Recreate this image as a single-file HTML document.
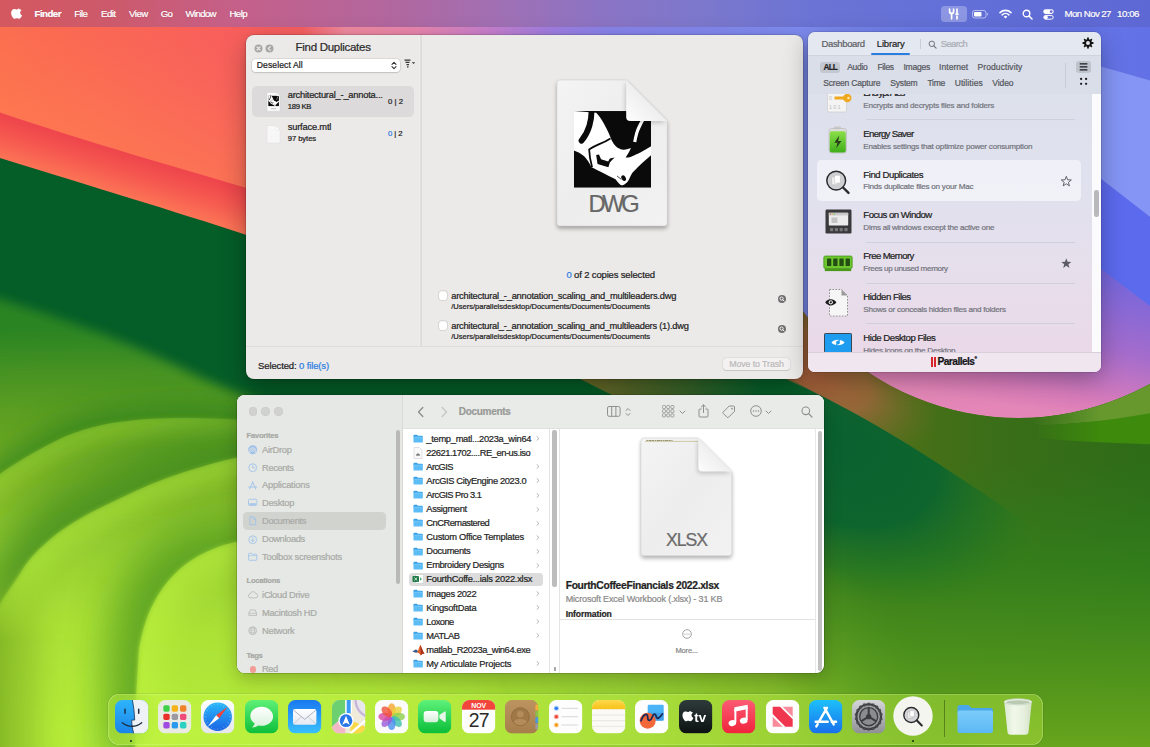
<!DOCTYPE html>
<html lang="en">
<head>
<meta charset="utf-8">
<title>Desktop</title>
<style>
*{box-sizing:border-box;margin:0;padding:0}
html,body{width:1150px;height:747px;overflow:hidden;background:#0a5c2a}
body{font-family:"Liberation Sans",sans-serif;position:relative;color:#222}
.abs{position:absolute}
.t{position:absolute;white-space:nowrap;-webkit-text-stroke:.22px}
#wall{position:absolute;left:0;top:0;width:1150px;height:747px;display:block}
svg{position:absolute;overflow:visible}
#mb{position:absolute;left:0;top:0;width:1150px;height:26.700px;background:linear-gradient(90deg,#d4585f 0,#cc5a6c 10%,#c4608a 21%,#b068a0 35%,#a070b4 43.5%,#8c74c4 52%,#7c78cc 61%,#6c74d4 70%,#6270d8 83%,#5e68d4 100%);color:#fff;text-shadow:0 0 2px rgba(0,0,0,.15)}
.win{position:absolute;overflow:hidden}
#fd{left:245.5px;top:34.5px;width:557px;height:344px;border-radius:8px;background:#ece9e9;box-shadow:0 0 0 .5px rgba(0,0,0,.22),0 10px 28px rgba(0,0,0,.28),0 2px 6px rgba(0,0,0,.12)}
#tb{left:807.5px;top:31.5px;width:293px;height:340.500px;border-radius:6.500px;box-shadow:0 0 0 .5px rgba(0,0,0,.2),0 8px 24px rgba(0,0,0,.3)}
#fw{left:236.5px;top:394.5px;width:587px;height:278px;border-radius:7.500px;background:#fff;box-shadow:0 0 0 .5px rgba(0,0,0,.28),0 6px 18px rgba(0,0,0,.22)}
#dock{position:absolute;-webkit-backdrop-filter:blur(14px);backdrop-filter:blur(14px);left:108px;top:693.5px;width:935px;height:51px;border-radius:11px;background:rgba(208,255,78,.34);box-shadow:inset 0 0 0 .6px rgba(235,255,190,.45),0 0 0 .5px rgba(0,40,0,.16)}
.ic{position:absolute;border-radius:7.600px;overflow:hidden}
</style>
</head>
<body>
<svg id="wall" viewBox="0 0 1150 747">
<defs>
<linearGradient id="sky" x1="0" y1="0" x2="1" y2="0">
<stop offset="0" stop-color="#fa664f"/>
<stop offset="0.2" stop-color="#f75a5e"/>
<stop offset="0.262" stop-color="#f65c62"/>
<stop offset="0.3" stop-color="#f08aa2"/>
<stop offset="0.36" stop-color="#ea86ac"/>
<stop offset="0.42" stop-color="#cc80cc"/>
<stop offset="0.48" stop-color="#a07ee2"/>
<stop offset="0.53" stop-color="#8884ec"/>
<stop offset="0.7" stop-color="#7e8cf0"/>
<stop offset="0.8" stop-color="#6c7cea"/>
<stop offset="1" stop-color="#6272e6"/>
</linearGradient>
<linearGradient id="coralv" gradientUnits="userSpaceOnUse" x1="60" y1="131" x2="122" y2="-59">
<stop offset="0" stop-color="#ff8150" stop-opacity="0.62"/>
<stop offset="0.45" stop-color="#ff8150" stop-opacity="0.25"/>
<stop offset="1" stop-color="#ff8150" stop-opacity="0"/>
</linearGradient>
<linearGradient id="band" x1="0" y1="0" x2="0.3" y2="1">
<stop offset="0" stop-color="#ee474c"/>
<stop offset="1" stop-color="#fe7c58"/>
</linearGradient>
<linearGradient id="bandfade" x1="0" y1="0" x2="1" y2="0">
<stop offset="0" stop-color="#07602b" stop-opacity="0"/>
<stop offset="0.3" stop-color="#07602b" stop-opacity="0"/>
<stop offset="0.62" stop-color="#4a6422" stop-opacity="0.75"/>
<stop offset="1" stop-color="#07602b" stop-opacity="1"/>
</linearGradient>
<filter id="b2"><feGaussianBlur stdDeviation="2"/></filter>
<filter id="b4"><feGaussianBlur stdDeviation="5.5"/></filter>
<filter id="b8"><feGaussianBlur stdDeviation="8"/></filter>
<filter id="b14"><feGaussianBlur stdDeviation="14"/></filter>
<filter id="b20" x="-30%" y="-30%" width="160%" height="160%"><feGaussianBlur stdDeviation="20"/></filter>
<filter id="b25"><feGaussianBlur stdDeviation="25"/></filter>
</defs>
<!-- sky -->
<rect x="0" y="0" width="1150" height="450" fill="url(#sky)"/>
<rect x="0" y="0" width="500" height="250" fill="url(#coralv)"/>
<!-- right sky -->
<polygon points="985,33.3 1150,80.5 1150,217.0 985,89.0" fill="#8595f5"/>
<polygon points="1000,100.6 1150,217 1150,420 1000,420" fill="#5c6aee"/>
<linearGradient id="purp" gradientUnits="userSpaceOnUse" x1="1100" y1="270" x2="1070" y2="420">
<stop offset="0" stop-color="#7466dc"/>
<stop offset="0.5" stop-color="#a46ccc"/>
<stop offset="0.85" stop-color="#d97cba"/>
<stop offset="1" stop-color="#e487b8"/>
</linearGradient>
<polygon points="860,87 1150,306 1150,430 860,430" fill="url(#purp)"/>
<!-- hill C -->
<linearGradient id="hillc" gradientUnits="userSpaceOnUse" x1="800" y1="0" x2="1150" y2="0">
<stop offset="0" stop-color="#a4623a"/>
<stop offset="0.12" stop-color="#96683a"/>
<stop offset="0.3" stop-color="#5e6f22"/>
<stop offset="0.5" stop-color="#457316"/>
<stop offset="0.75" stop-color="#3c7a12"/>
<stop offset="1" stop-color="#4a8a18"/>
</linearGradient>
<path d="M600,200 L747.4,147 A271.1,271.1 0 0 0 1289.6,147 L1300,760 L600,760 Z" fill="url(#hillc)"/>
<path d="M1150,392 C1100,412 1060,422 1020,424 C1070,436 1110,442 1150,444 Z" fill="#5a9c1e" filter="url(#b2)"/>
<path d="M1150,384 C1110,405 1070,418 1030,421 C1070,419 1110,408 1150,394 Z" fill="#6c9c34" opacity="0.8"/>

<!-- layer B (band) -->
<linearGradient id="bandp" gradientUnits="userSpaceOnUse" x1="100" y1="146" x2="86" y2="192">
<stop offset="0" stop-color="#ee464c"/>
<stop offset="0.35" stop-color="#f5564f"/>
<stop offset="1" stop-color="#fe7d58"/>
</linearGradient>
<linearGradient id="bandh" gradientUnits="userSpaceOnUse" x1="250" y1="0" x2="790" y2="0">
<stop offset="0" stop-color="#b06a38" stop-opacity="0"/>
<stop offset="0.35" stop-color="#a0682f" stop-opacity="0.7"/>
<stop offset="0.62" stop-color="#6c6a28" stop-opacity="1"/>
<stop offset="0.8" stop-color="#3a6428" stop-opacity="1"/>
<stop offset="0.95" stop-color="#07602b" stop-opacity="1"/>
</linearGradient>
<path id="pB" d="M-10,109 C90,143 170,165 245,187.5 C450,255 700,335 824,397 C900,436 960,478 1013,513 C1060,545 1100,600 1120,760 L-10,760 Z" fill="url(#bandp)"/>
<path d="M-10,109 C90,143 170,165 245,187.5 C450,255 700,335 824,397 C900,436 960,478 1013,513 C1060,545 1100,600 1120,760 L-10,760 Z" fill="url(#bandh)"/>
<!-- hill A -->
<path id="pA" d="M-10,155 C90,186 170,210 245,234.5 C380,283 500,338 582,380 C600,389 606,392 612,395 C700,440 770,505 820,560 C870,615 920,660 960,700 L1200,760 L-10,760 Z" fill="#055d28"/>
<!-- arc 1 -->
<radialGradient id="lz" gradientUnits="userSpaceOnUse" cx="0" cy="0" r="1" gradientTransform="translate(90,735) scale(1150,405)">
<stop offset="0" stop-color="#b8ee3a"/>
<stop offset="0.28" stop-color="#abe136"/>
<stop offset="0.48" stop-color="#94cc30"/>
<stop offset="0.63" stop-color="#7eb628"/>
<stop offset="0.77" stop-color="#62a222"/>
<stop offset="0.9" stop-color="#469220"/>
<stop offset="1" stop-color="#2a8422"/>
</radialGradient>
<linearGradient id="fadeRg" gradientUnits="userSpaceOnUse" x1="300" y1="0" x2="640" y2="0">
<stop offset="0" stop-color="#fff"/><stop offset="1" stop-color="#000"/>
</linearGradient>
<mask id="fadeR" maskUnits="userSpaceOnUse" x="-50" y="0" width="1300" height="800"><rect x="-50" y="0" width="1300" height="800" fill="url(#fadeRg)"/></mask>
<clipPath id="c1"><path d="M-20,293 C40,311 70,322 96,331 C130,345 165,359 193,374 C300,425 480,470 600,500 C700,525 780,540 820,560 C870,590 920,650 949,680 L1200,780 L-20,780 Z"/></clipPath>
<clipPath id="c2"><path d="M-20,490 C-10,480 20,458 64,437 C90,426 110,423 128,421 C150,418 170,418 193,418 C300,420 420,440 560,520 C700,600 800,690 830,780 L-20,780 Z"/></clipPath>
<clipPath id="c3"><path d="M-20,640 C0,600 10,590 21,572 C28,560 36,552 45,544 C62,528 85,515 104,506 C125,496 145,486 167,478 C190,470 215,462 240,457 C360,440 470,480 560,560 C640,630 680,700 690,780 L-20,780 Z"/></clipPath>
<clipPath id="c4"><path d="M136,780 C135,740 135,720 136,700 C137,680 138,665 139,649 C143,628 148,612 157,597 C167,580 180,567 195,558 C210,549 225,544 240,541 C330,530 420,560 480,640 C510,690 520,740 520,780 Z"/></clipPath>
<path d="M-20,293 C40,311 70,322 96,331 C130,345 165,359 193,374 C300,425 480,470 600,500 C700,525 780,540 820,560 C870,590 920,650 949,680 L1200,780 L-20,780 Z" fill="url(#lz)" filter="url(#b4)"/>
<g mask="url(#fadeR)">
<!-- arc 2 -->
<g clip-path="url(#c1)"><path d="M-20,490 C-10,480 20,458 64,437 C90,426 110,423 128,421 C150,418 170,418 193,418 C300,420 420,440 560,520 C700,600 800,690 830,780 L-20,780 Z" fill="#2a7e1e" opacity="0.75" filter="url(#b14)" transform="translate(-2,-14)"/></g>
<path d="M-20,490 C-10,480 20,458 64,437 C90,426 110,423 128,421 C150,418 170,418 193,418 C300,420 420,440 560,520 C700,600 800,690 830,780 L-20,780 Z" fill="url(#lz)" filter="url(#b2)"/>
<g clip-path="url(#c2)"><path d="M-20,490 C-10,480 20,458 64,437 C90,426 110,423 128,421 C150,418 170,418 193,418 C300,420 420,440 560,520" fill="none" stroke="#a4dc38" stroke-width="36" opacity="0.4" filter="url(#b8)"/></g>
<!-- arc 3 -->
<g clip-path="url(#c2)"><path d="M-20,640 C0,600 10,590 21,572 C28,560 36,552 45,544 C62,528 85,515 104,506 C125,496 145,486 167,478 C190,470 215,462 240,457 C360,440 470,480 560,560 C640,630 680,700 690,780 L-20,780 Z" fill="#3a861e" opacity="0.75" filter="url(#b20)" transform="translate(-14,-32)"/></g>
<path d="M-20,640 C0,600 10,590 21,572 C28,560 36,552 45,544 C62,528 85,515 104,506 C125,496 145,486 167,478 C190,470 215,462 240,457 C360,440 470,480 560,560 C640,630 680,700 690,780 L-20,780 Z" fill="url(#lz)" filter="url(#b2)"/>
<g clip-path="url(#c3)"><path d="M-20,640 C0,600 10,590 21,572 C28,560 36,552 45,544 C62,528 85,515 104,506 C125,496 145,486 167,478 C190,470 215,462 240,457 C360,440 470,480 560,560" fill="none" stroke="#b4ec3c" stroke-width="40" opacity="0.4" filter="url(#b8)"/></g>
<!-- arc 4 -->
<g clip-path="url(#c3)"><path d="M136,780 C135,740 135,720 136,700 C137,680 138,665 139,649 C143,628 148,612 157,597 C167,580 180,567 195,558 C210,549 225,544 240,541 C330,530 420,560 480,640 C510,690 520,740 520,780 Z" fill="#4a941e" opacity="0.75" filter="url(#b20)" transform="translate(-30,-18)"/></g>
<path d="M136,780 C135,740 135,720 136,700 C137,680 138,665 139,649 C143,628 148,612 157,597 C167,580 180,567 195,558 C210,549 225,544 240,541 C330,530 420,560 480,640 C510,690 520,740 520,780 Z" fill="url(#lz)" filter="url(#b2)"/>
<g clip-path="url(#c4)"><path d="M136,780 C135,740 135,720 136,700 C137,680 138,665 139,649 C143,628 148,612 157,597 C167,580 180,567 195,558 C210,549 225,544 240,541 C330,530 420,560 480,640" fill="none" stroke="#c0f440" stroke-width="50" opacity="0.5" filter="url(#b14)"/></g>
</g>
<!-- left-bottom edge shading -->
<linearGradient id="lbh" gradientUnits="userSpaceOnUse" x1="0" y1="0" x2="66" y2="0">
<stop offset="0" stop-color="#7fb224" stop-opacity="0.85"/>
<stop offset="0.45" stop-color="#86ba28" stop-opacity="0.5"/>
<stop offset="1" stop-color="#a0d432" stop-opacity="0"/>
</linearGradient>
<linearGradient id="lbv" gradientUnits="userSpaceOnUse" x1="0" y1="560" x2="0" y2="640">
<stop offset="0" stop-color="#000"/><stop offset="1" stop-color="#fff"/>
</linearGradient>
<mask id="lbm" maskUnits="userSpaceOnUse" x="0" y="540" width="80" height="220"><rect x="0" y="540" width="80" height="220" fill="url(#lbv)"/></mask>
<rect x="0" y="540" width="70" height="220" fill="url(#lbh)" mask="url(#lbm)"/>
<!-- right-bottom region redraw -->
<linearGradient id="rfadeg" gradientUnits="userSpaceOnUse" x1="775" y1="0" x2="824" y2="0">
<stop offset="0" stop-color="#000"/><stop offset="1" stop-color="#fff"/>
</linearGradient>
<mask id="rfade" maskUnits="userSpaceOnUse" x="700" y="0" width="600" height="800"><rect x="700" y="0" width="600" height="800" fill="url(#rfadeg)"/></mask>
<linearGradient id="rvl" gradientUnits="userSpaceOnUse" x1="0" y1="460" x2="0" y2="747">
<stop offset="0" stop-color="#2c7c1c" stop-opacity="0"/>
<stop offset="0.38" stop-color="#34821c" stop-opacity="0.8"/>
<stop offset="0.75" stop-color="#52961c" stop-opacity="0.93"/>
<stop offset="1" stop-color="#69a71c" stop-opacity="0.96"/>
</linearGradient>
<radialGradient id="rtri" gradientUnits="userSpaceOnUse" cx="0" cy="0" r="1" gradientTransform="translate(810,425) rotate(31) scale(255,150)">
<stop offset="0" stop-color="#096030" stop-opacity="1"/>
<stop offset="0.55" stop-color="#0b642e" stop-opacity="0.95"/>
<stop offset="0.8" stop-color="#1c7226" stop-opacity="0.55"/>
<stop offset="1" stop-color="#2f7e1c" stop-opacity="0"/>
</radialGradient>
<radialGradient id="rglow" gradientUnits="userSpaceOnUse" cx="0" cy="0" r="1" gradientTransform="translate(780,770) rotate(-40) scale(190,340)">
<stop offset="0" stop-color="#84c02a" stop-opacity="1"/>
<stop offset="0.45" stop-color="#72ae24" stop-opacity="0.85"/>
<stop offset="1" stop-color="#4c9420" stop-opacity="0"/>
</radialGradient>
<clipPath id="cB"><path d="M700,335 C760,362 800,385 824,397 C900,436 960,478 1013,513 C1060,545 1100,600 1150,700 L1150,760 L700,760 Z"/></clipPath>
<linearGradient id="hillc2" gradientUnits="userSpaceOnUse" x1="800" y1="0" x2="1150" y2="0">
<stop offset="0" stop-color="#5e7022"/>
<stop offset="0.28" stop-color="#4a7018"/>
<stop offset="0.57" stop-color="#3a6e18"/>
<stop offset="1" stop-color="#2e6c18"/>
</linearGradient>
<radialGradient id="brown" gradientUnits="userSpaceOnUse" cx="0" cy="0" r="1" gradientTransform="translate(800,368) rotate(25) scale(150,70)">
<stop offset="0" stop-color="#ac5e3c" stop-opacity="1"/>
<stop offset="0.5" stop-color="#9a663a" stop-opacity="0.9"/>
<stop offset="1" stop-color="#6e6c28" stop-opacity="0"/>
</radialGradient>
<linearGradient id="wfade" gradientUnits="userSpaceOnUse" x1="1030" y1="0" x2="1100" y2="0">
<stop offset="0" stop-color="#000"/><stop offset="1" stop-color="#fff"/>
</linearGradient>
<mask id="wmask" maskUnits="userSpaceOnUse" x="1000" y="350" width="200" height="150"><rect x="1000" y="350" width="200" height="150" fill="url(#wfade)"/></mask>
<clipPath id="cC"><path d="M600,200 L747.4,147 A271.1,271.1 0 0 0 1289.6,147 L1300,760 L600,760 Z"/></clipPath>
<g mask="url(#rfade)">
<path d="M600,200 L747.4,147 A271.1,271.1 0 0 0 1289.6,147 L1300,760 L600,760 Z" fill="url(#hillc2)"/>
<g clip-path="url(#cC)"><rect x="640" y="280" width="340" height="220" fill="url(#brown)"/></g>
<g mask="url(#wmask)" clip-path="url(#cC)">
<path d="M1020,415 L1160,370 L1160,414 C1110,421 1070,424.500 1039,425.400 Z" fill="#66982e"/>
<path d="M1039,425.400 C1070,424.500 1110,421 1160,411.500 L1160,444.500 C1120,443.500 1080,442 1039,438 Z" fill="#3e8a0c"/>
</g>
<rect x="700" y="440" width="500" height="320" fill="url(#rvl)"/>
<g clip-path="url(#cB)"><rect x="700" y="300" width="500" height="460" fill="url(#rtri)"/></g>
<rect x="700" y="400" width="500" height="360" fill="url(#rglow)"/>
</g>
</svg>
<div id="mb">
<svg style="left:12.2px;top:7.600px" width="10.200" height="11.400" viewBox="-54 -2 204 208"><path fill="#fff" d="M141.5 147.300c-3.900 9-8.500 17.300-13.900 24.900-7.300 10.400-13.300 17.600-17.900 21.600-7.100 6.600-14.800 9.900-22.900 10.100-5.900 0-12.900-1.700-21.200-5.100-8.300-3.400-15.900-5.100-22.800-5.100-7.300 0-15.100 1.700-23.400 5.100-8.400 3.400-15.100 5.200-20.200 5.400-7.800.3-15.700-3.100-23.500-10.400-5-4.400-11.200-11.900-18.700-22.500-8-11.300-14.600-24.300-19.800-39.200-5.500-16.100-8.300-31.600-8.300-46.700 0-17.300 3.700-32.100 11.200-44.600 5.900-10 13.700-18 23.400-23.800 9.800-5.800 20.300-8.800 31.700-9 6.200 0 14.400 1.900 24.500 5.700 10.100 3.800 16.600 5.700 19.400 5.700 2.100 0 9.300-2.200 21.500-6.700 11.500-4.100 21.200-5.900 29.200-5.200 21.600 1.700 37.800 10.300 48.600 25.600-19.300 11.700-28.900 28.100-28.700 49.100.2 16.400 6.100 30 17.800 40.800 5.300 5 11.200 8.900 17.800 11.600-1.400 4.100-2.900 8.100-4.500 11.900zM92 4.100c0 12.800-4.700 24.800-14 35.900-11.300 13.200-24.900 20.800-39.700 19.600-.2-1.500-.3-3.200-.3-4.900 0-12.300 5.400-25.500 14.900-36.300 4.800-5.500 10.800-10 18.200-13.600C78.500 1.200 85.500-.8 92.100-1c.2 1.700.3 3.400.3 5.100z"/></svg>
<span class="t" style="left:34.60px;top:7.11px;font-size:9.70px;line-height:13px;letter-spacing:-0.557px;font-weight:bold;color:#fff;">Finder</span>
<span class="t" style="left:74.30px;top:7.11px;font-size:9.70px;line-height:13px;letter-spacing:-0.683px;color:#fff;">File</span>
<span class="t" style="left:101.00px;top:7.11px;font-size:9.70px;line-height:13px;letter-spacing:-0.579px;color:#fff;">Edit</span>
<span class="t" style="left:129.00px;top:7.11px;font-size:9.70px;line-height:13px;letter-spacing:-0.513px;color:#fff;">View</span>
<span class="t" style="left:160.70px;top:7.11px;font-size:9.70px;line-height:13px;letter-spacing:-0.770px;color:#fff;">Go</span>
<span class="t" style="left:185.50px;top:7.11px;font-size:9.70px;line-height:13px;letter-spacing:-0.667px;color:#fff;">Window</span>
<span class="t" style="left:229.40px;top:7.11px;font-size:9.70px;line-height:13px;letter-spacing:-0.563px;color:#fff;">Help</span>
<div class="abs" style="left:940.5px;top:6px;width:26.5px;height:16px;border-radius:3.5px;background:rgba(255,255,255,.27)"></div>
<svg style="left:947px;top:8px" width="14" height="12" viewBox="0 0 14 12"><g fill="none" stroke="#fff" stroke-width="1.700" stroke-linecap="round"><path d="M2.600 1.200v2.200a2 2 0 0 0 4 0V1.200M4.600 5.400V10.800"/><path d="M10 1.200V6M10 8.200v2.600"/><path d="M8.700 6.200h2.600" stroke-width="1.300"/></g></svg>
<svg style="left:972px;top:9.500px" width="17" height="9" viewBox="0 0 17 9"><rect x=".5" y=".5" width="13.500" height="7.500" rx="2.200" fill="none" stroke="#fff" stroke-opacity=".55"/><rect x="2" y="2" width="7.500" height="4.500" rx="1" fill="#fff"/><path d="M15.200 3v2.600c.8-.3 1.100-.8 1.100-1.300s-.3-1-1.100-1.300z" fill="#fff" fill-opacity=".6"/></svg>
<svg style="left:999px;top:8.500px" width="13" height="10" viewBox="0 0 13 10"><g fill="none" stroke="#fff" stroke-linecap="round"><path d="M1 3.600a8 8 0 0 1 11 0" stroke-width="1.600"/><path d="M3.100 5.800a5 5 0 0 1 6.800 0" stroke-width="1.600"/></g><path d="M6.500 9.600 4.700 7.700a2.600 2.600 0 0 1 3.600 0z" fill="#fff"/></svg>
<svg style="left:1021.500px;top:8.500px" width="11" height="11" viewBox="0 0 11 11"><circle cx="4.500" cy="4.500" r="3.300" fill="none" stroke="#fff" stroke-width="1.400"/><path d="M7 7l3 3" stroke="#fff" stroke-width="1.600" stroke-linecap="round"/></svg>
<svg style="left:1043px;top:8.500px" width="11" height="11" viewBox="0 0 11 11"><rect x=".3" y=".3" width="10.400" height="4.600" rx="2.300" fill="#fff"/><circle cx="8.200" cy="2.600" r="1.400" fill="#6a6cd2"/><rect x=".8" y="6.400" width="9.400" height="3.800" rx="1.900" fill="none" stroke="#fff" stroke-width="1"/><circle cx="2.900" cy="8.300" r="1.900" fill="#fff"/></svg>
<span class="t" style="left:1064.60px;top:7.11px;font-size:9.70px;line-height:13px;letter-spacing:-0.600px;color:#fff;">Mon Nov 27</span>
<span class="t" style="left:1117.00px;top:7.11px;font-size:9.70px;line-height:13px;letter-spacing:-0.435px;color:#fff;">10:06</span>
</div>
<div id="fd" class="win">
<div class="abs" style="left:173.800px;top:0;width:1px;height:311.500px;background:#f1eeee"></div>
<div class="abs" style="left:174.900px;top:0;width:1.300px;height:311.500px;background:#dfdcdc"></div>
<div class="abs" style="left:0;top:311px;width:557px;height:1px;background:#dfdcdc"></div>
<svg style="left:8.7px;top:9.0px" width="9" height="9" viewBox="0 0 9 9"><circle cx="4.500" cy="4.500" r="4" fill="#a9a8a8"/><path d="M3 3l3 3M6 3l-3 3" stroke="#edebeb" stroke-width="1.100" stroke-linecap="round"/></svg>
<svg style="left:19.6px;top:9.0px" width="9" height="9" viewBox="0 0 9 9"><circle cx="4.500" cy="4.500" r="4" fill="#a9a8a8"/><path d="M5.300 2.600 3.300 4.500l2 1.900" fill="none" stroke="#edebeb" stroke-width="1.200" stroke-linecap="round" stroke-linejoin="round"/></svg>
<span class="t" style="left:50.10px;top:5.63px;font-size:11.50px;line-height:15px;letter-spacing:-0.284px;color:#2b2b2b;">Find Duplicates</span>
<div class="abs" style="left:6.400px;top:24.800px;width:148.500px;height:12.600px;border-radius:3.500px;background:#fff;box-shadow:0 0 0 .5px rgba(0,0,0,.1),0 .5px 1.500px rgba(0,0,0,.22)"></div>
<span class="t" style="left:11.30px;top:25.40px;font-size:8.60px;line-height:11px;letter-spacing:0.089px;color:#222;">Deselect All</span>
<svg style="left:145.8px;top:26.5px" width="6" height="9" viewBox="0 0 6 9"><path d="M1 3.300 3 1.300l2 2M1 5.700l2 2 2-2" fill="none" stroke="#333" stroke-width="1.100" stroke-linecap="round" stroke-linejoin="round"/></svg>
<svg style="left:158.5px;top:24.8px" width="12" height="9" viewBox="0 0 12 9"><path d="M.5 1.200h6M1.500 3.400h4M2.500 5.600h2.500M3 7.800h1.500" stroke="#333" stroke-width="1.300"/><path d="M7.800 3.200h3.400L9.500 5z" fill="#333"/></svg>
<div class="abs" style="left:6.400px;top:51.400px;width:162.400px;height:31px;border-radius:5px;background:#dcdada"></div>
<svg style="left:20.3px;top:57.6px" width="15" height="20" viewBox="0 0 15 20"><path d="M1 .5h9.500l3.500 3.500v15.200h-13z" fill="#fbfbfb" stroke="#d2d2d2" stroke-width=".5"/><g transform="translate(2.150,3.500) scale(.0146)"><g clip-path="url(#rhc)"><rect x="2" y="8" width="738" height="734" fill="#0a0a0a"/><path d="M2,8 L215,25 C250,60 290,120 340,230 C352,262 362,285 370,300 C390,335 405,350 420,360 C445,375 465,380 480,378 C505,376 530,370 548,362 C535,395 515,425 497,452 C520,455 545,448 560,440 C600,425 680,385 740,345 L740,430 C700,465 660,500 640,520 C600,560 575,585 560,600 C545,625 535,650 530,660 C520,680 510,692 500,700 C490,710 480,716 470,718 C462,720 455,718 450,715 C430,700 415,680 400,660 C360,640 330,625 300,610 C250,585 200,560 170,545 C150,500 125,465 100,440 C65,410 30,395 2,385 Z" fill="#fff"/><path d="M170,0 C172,50 165,100 150,150 C135,200 110,250 75,292" fill="none" stroke="#0a0a0a" stroke-width="56" stroke-linecap="round"/><rect x="100" y="-40" width="140" height="48" fill="#edebeb"/><path d="M352,270 C320,290 280,310 250,322 C210,340 170,358 148,376 C150,430 160,490 176,545" fill="none" stroke="#0a0a0a" stroke-width="17" stroke-linejoin="round"/><path d="M660,95 C635,140 615,180 603,220 C593,255 588,280 584,305" fill="none" stroke="#fff" stroke-width="30"/><path d="M215,428 L242,424 L262,470 L330,492 L346,462 L392,453 C375,470 358,485 346,500 L332,546 L228,515 Z" fill="#0a0a0a"/><path d="M268,438 L322,462 L314,474 L262,452 Z" fill="#fff"/><ellipse cx="478" cy="650" rx="20" ry="29" fill="#0a0a0a" transform="rotate(-28 478 650)"/><path d="M415,630 L456,662" stroke="#0a0a0a" stroke-width="7"/></g></g><path d="M10.500 .5v2.500a1 1 0 0 0 1 1h2.500z" fill="#fff" stroke="#d2d2d2" stroke-width=".4"/><path d="M5 16.700h5" stroke="#9a9a9a" stroke-width=".6"/></svg>
<span class="t" style="left:42.20px;top:54.91px;font-size:9.30px;line-height:12px;letter-spacing:-0.212px;color:#222;">architectural_-_annota...</span>
<span class="t" style="left:42.20px;top:67.79px;font-size:7.70px;line-height:10px;letter-spacing:-0.293px;color:#222;">189 KB</span>
<span class="t" style="left:142.50px;top:62.19px;font-size:7.70px;line-height:10px;letter-spacing:0.031px;color:#222;">0 | 2</span>
<svg style="left:20.3px;top:90.0px" width="15" height="19" viewBox="0 0 15 19"><path d="M1 .5h8.500l4.500 4.500v13h-13z" fill="#f7f7f7" stroke="#dcdcdc" stroke-width=".5"/><path d="M9.500 .5v3.500a1 1 0 0 0 1 1h3.500z" fill="#fff" stroke="#dcdcdc" stroke-width=".5"/></svg>
<span class="t" style="left:42.20px;top:86.41px;font-size:9.30px;line-height:12px;letter-spacing:-0.180px;color:#222;">surface.mtl</span>
<span class="t" style="left:42.20px;top:99.89px;font-size:7.70px;line-height:10px;letter-spacing:-0.076px;color:#222;">97 bytes</span>
<span class="t" style="left:142.50px;top:94.39px;font-size:7.70px;line-height:10px;color:#222;letter-spacing:-.1px;"><span style="color:#2a7de1">0</span> | 2</span>
<svg style="left:303.8px;top:39.3px" width="126.2" height="163.9" viewBox="0 0 126.2 163.9"><defs><linearGradient id="dg557" x1="0" y1="0" x2="1" y2="1"><stop offset="0" stop-color="#f4f4f4"/><stop offset=".5" stop-color="#ededed"/><stop offset="1" stop-color="#f2f2f2"/></linearGradient><linearGradient id="df557" x1="0" y1="1" x2="1" y2="0"><stop offset="0" stop-color="#fdfdfd"/><stop offset="1" stop-color="#e0e0e0"/></linearGradient><clipPath id="rhc"><rect x="2" y="8" width="738" height="734"/></clipPath><filter id="ds557" x="-20%" y="-20%" width="140%" height="140%"><feGaussianBlur stdDeviation="2.200"/></filter></defs><path d="M11.0 6.0 h66.2 l41.0 41.0 v101.9 a3 3 0 0 1 -3 3 h-104.2 a3 3 0 0 1 -3 -3 v-139.9 a3 3 0 0 1 3 -3z" fill="#000" opacity=".33" filter="url(#ds557)" transform="translate(0,2.500)"/><path d="M11.0 6.0 h66.2 l41.0 41.0 v101.9 a3 3 0 0 1 -3 3 h-104.2 a3 3 0 0 1 -3 -3 v-139.9 a3 3 0 0 1 3 -3z" fill="url(#dg557)" stroke="#d0d0d0" stroke-width=".5"/><g transform="translate(24.700,36.200) scale(.1045)"><g clip-path="url(#rhc)"><rect x="2" y="8" width="738" height="734" fill="#0a0a0a"/><path d="M2,8 L215,25 C250,60 290,120 340,230 C352,262 362,285 370,300 C390,335 405,350 420,360 C445,375 465,380 480,378 C505,376 530,370 548,362 C535,395 515,425 497,452 C520,455 545,448 560,440 C600,425 680,385 740,345 L740,430 C700,465 660,500 640,520 C600,560 575,585 560,600 C545,625 535,650 530,660 C520,680 510,692 500,700 C490,710 480,716 470,718 C462,720 455,718 450,715 C430,700 415,680 400,660 C360,640 330,625 300,610 C250,585 200,560 170,545 C150,500 125,465 100,440 C65,410 30,395 2,385 Z" fill="#fff"/><path d="M170,0 C172,50 165,100 150,150 C135,200 110,250 75,292" fill="none" stroke="#0a0a0a" stroke-width="56" stroke-linecap="round"/><rect x="100" y="-40" width="140" height="48" fill="#edebeb"/><path d="M352,270 C320,290 280,310 250,322 C210,340 170,358 148,376 C150,430 160,490 176,545" fill="none" stroke="#0a0a0a" stroke-width="17" stroke-linejoin="round"/><path d="M660,95 C635,140 615,180 603,220 C593,255 588,280 584,305" fill="none" stroke="#fff" stroke-width="30"/><path d="M215,428 L242,424 L262,470 L330,492 L346,462 L392,453 C375,470 358,485 346,500 L332,546 L228,515 Z" fill="#0a0a0a"/><path d="M268,438 L322,462 L314,474 L262,452 Z" fill="#fff"/><ellipse cx="478" cy="650" rx="20" ry="29" fill="#0a0a0a" transform="rotate(-28 478 650)"/><path d="M415,630 L456,662" stroke="#0a0a0a" stroke-width="7"/></g></g><path d="M77.2 6.0 v37.0 a4 4 0 0 0 4 4 h37.0 z" fill="#000" opacity=".18" filter="url(#ds557)" transform="translate(-1,2)"/><path d="M77.2 6.0 v37.0 a4 4 0 0 0 4 4 h37.0 z" fill="url(#df557)"/></svg>
<span class="t" style="left:343.00px;top:154.77px;font-size:23.70px;line-height:31px;letter-spacing:-3.306px;color:#666;">DWG</span>
<span class="t" style="left:321.00px;top:234.11px;font-size:9.50px;line-height:12px;color:#222;letter-spacing:-.16px;"><span style="color:#2a7de1">0</span> of 2 copies selected</span>
<div class="abs" style="left:193.1px;top:256.8px;width:8.500px;height:8.500px;border-radius:2.200px;background:#fff;box-shadow:0 0 0 .5px rgba(0,0,0,.16),inset 0 .5px 1px rgba(0,0,0,.08)"></div>
<span class="t" style="left:205.70px;top:255.31px;font-size:9.30px;line-height:12px;letter-spacing:-0.224px;color:#222;">architectural_-_annotation_scaling_and_multileaders.dwg</span>
<span class="t" style="left:205.70px;top:267.49px;font-size:7.60px;line-height:10px;letter-spacing:-0.031px;color:#222;">/Users/parallelsdesktop/Documents/Documents/Documents</span>
<svg style="left:532.5px;top:260.2px" width="8" height="8" viewBox="0 0 8 8"><circle cx="4" cy="4" r="4" fill="#6f6f6f"/><circle cx="3.600" cy="3.600" r="1.600" fill="none" stroke="#fff" stroke-width=".9"/><path d="M4.800 4.800l1.400 1.400" stroke="#fff" stroke-width=".9" stroke-linecap="round"/></svg>
<div class="abs" style="left:193.1px;top:286.7px;width:8.500px;height:8.500px;border-radius:2.200px;background:#fff;box-shadow:0 0 0 .5px rgba(0,0,0,.16),inset 0 .5px 1px rgba(0,0,0,.08)"></div>
<span class="t" style="left:205.70px;top:285.21px;font-size:9.30px;line-height:12px;letter-spacing:-0.233px;color:#222;">architectural_-_annotation_scaling_and_multileaders (1).dwg</span>
<span class="t" style="left:205.70px;top:297.39px;font-size:7.60px;line-height:10px;letter-spacing:-0.031px;color:#222;">/Users/parallelsdesktop/Documents/Documents/Documents</span>
<svg style="left:532.5px;top:290.1px" width="8" height="8" viewBox="0 0 8 8"><circle cx="4" cy="4" r="4" fill="#6f6f6f"/><circle cx="3.600" cy="3.600" r="1.600" fill="none" stroke="#fff" stroke-width=".9"/><path d="M4.800 4.800l1.400 1.400" stroke="#fff" stroke-width=".9" stroke-linecap="round"/></svg>
<span class="t" style="left:12.60px;top:325.11px;font-size:9.50px;line-height:12px;color:#222;letter-spacing:-.13px;">Selected: <span style="color:#2a7de1">0 file(s)</span></span>
<div class="abs" style="left:477.3px;top:323.2px;width:67.500px;height:12.600px;border-radius:3.500px;background:#f3f1f1;box-shadow:0 0 0 .5px rgba(0,0,0,.07),0 .5px 1px rgba(0,0,0,.12)"></div>
<span class="t" style="left:483.80px;top:324.10px;font-size:8.80px;line-height:11px;letter-spacing:-0.097px;color:#bcbaba;">Move to Trash</span>
</div>
<div id="tb" class="win">
<div class="abs" style="left:0;top:0;width:293px;height:341px;background:linear-gradient(180deg,#e4e8f0 0,#e4e8f0 23px,#dadee8 23.5px,#dadee8 62px,#dde1ec 62.5px,#e0e1ee 150px,#e6dfec 230px,#ead9e8 320px,#ecdbe9 341px)"></div>
<div class="abs" style="left:284.500px;top:62.200px;width:9px;height:258px;background:#fbfbfd"></div>
<div class="abs" style="left:286.500px;top:158px;width:4.600px;height:27px;border-radius:2.300px;background:#b9b9bb"></div>
<div class="abs" style="left:0;top:23px;width:293px;height:.6px;background:#cfd3dc"></div>
<span class="t" style="left:14.10px;top:6.31px;font-size:9.50px;line-height:12px;letter-spacing:-0.375px;color:#5f6168;">Dashboard</span>
<span class="t" style="left:69.30px;top:6.31px;font-size:9.50px;line-height:12px;letter-spacing:-0.177px;color:#1d1d22;-webkit-text-stroke:.2px #1d1d22;">Library</span>
<div class="abs" style="left:63.0px;top:21.9px;width:39.300px;height:1.600px;background:#2a7de1;border-radius:1px"></div>
<div class="abs" style="left:112.8px;top:7.0px;width:.7px;height:10.500px;background:#c9cdd6"></div>
<svg style="left:120.00px;top:8.00px" width="9.00" height="9.00" viewBox="0 0 9 9"><circle cx="3.800" cy="3.800" r="2.700" fill="none" stroke="#6e7078" stroke-width="1"/><path d="M5.800 5.800l2.300 2.300" stroke="#6e7078" stroke-width="1.100" stroke-linecap="round"/></svg>
<span class="t" style="left:133.20px;top:6.11px;font-size:9.30px;line-height:12px;letter-spacing:-0.511px;color:#a9acb4;">Search</span>
<svg style="left:273.50px;top:4.50px" width="14.00" height="14.00" viewBox="0 0 14 14"><polygon points="12.43,6.12 12.43,7.88 10.86,7.90 10.36,9.09 11.46,10.22 10.22,11.46 9.09,10.36 7.90,10.86 7.88,12.43 6.12,12.43 6.10,10.86 4.91,10.36 3.78,11.46 2.54,10.22 3.64,9.09 3.14,7.90 1.57,7.88 1.57,6.12 3.14,6.10 3.64,4.91 2.54,3.78 3.78,2.54 4.91,3.64 6.10,3.14 6.12,1.57 7.88,1.57 7.90,3.14 9.09,3.64 10.22,2.54 11.46,3.78 10.36,4.91 10.86,6.10" fill="#111"/><circle cx="7.00" cy="7.00" r="1.98" fill="#e4e8f0"/></svg>
<div class="abs" style="left:12.2px;top:30.7px;width:20.800px;height:10.800px;border-radius:3px;background:#c3c7d0"></div>
<span class="t" style="left:16.00px;top:30.70px;font-size:8.30px;line-height:11px;letter-spacing:-0.845px;font-weight:bold;color:#26262b;">ALL</span>
<span class="t" style="left:39.70px;top:30.70px;font-size:8.50px;line-height:11px;letter-spacing:-0.308px;color:#55575e;">Audio</span>
<span class="t" style="left:69.90px;top:30.70px;font-size:8.50px;line-height:11px;letter-spacing:-0.309px;color:#55575e;">Files</span>
<span class="t" style="left:96.00px;top:30.70px;font-size:8.50px;line-height:11px;letter-spacing:-0.246px;color:#55575e;">Images</span>
<span class="t" style="left:131.60px;top:30.70px;font-size:8.50px;line-height:11px;letter-spacing:0.034px;color:#55575e;">Internet</span>
<span class="t" style="left:170.10px;top:30.70px;font-size:8.50px;line-height:11px;letter-spacing:0.072px;color:#55575e;">Productivity</span>
<span class="t" style="left:15.70px;top:46.10px;font-size:8.50px;line-height:11px;letter-spacing:-0.174px;color:#55575e;">Screen Capture</span>
<span class="t" style="left:82.80px;top:46.10px;font-size:8.50px;line-height:11px;letter-spacing:-0.190px;color:#55575e;">System</span>
<span class="t" style="left:120.00px;top:46.10px;font-size:8.50px;line-height:11px;letter-spacing:-0.268px;color:#55575e;">Time</span>
<span class="t" style="left:147.20px;top:46.10px;font-size:8.50px;line-height:11px;letter-spacing:0.079px;color:#55575e;">Utilities</span>
<span class="t" style="left:184.70px;top:46.10px;font-size:8.50px;line-height:11px;letter-spacing:-0.057px;color:#55575e;">Video</span>
<div class="abs" style="left:257.1px;top:31.0px;width:.7px;height:25px;background:#c9cdd6"></div>
<div class="abs" style="left:268.0px;top:29.7px;width:15px;height:11.600px;border-radius:3px;background:#bfc3cc"></div>
<svg style="left:268.00px;top:29.70px" width="15.00" height="26.00" viewBox="0 0 15 26"><path d="M3.700 2.900h7.700M3.700 5.900h7.700M3.700 8.800h7.700" stroke="#1a1a1f" stroke-width="1.350"/><g fill="#1a1a1f"><circle cx="5.100" cy="17.900" r="1.150"/><circle cx="10.100" cy="17.900" r="1.150"/><circle cx="5.100" cy="22.800" r="1.150"/><circle cx="10.100" cy="22.800" r="1.150"/></g></svg>
<div class="abs" style="left:0;top:62.200px;width:284.500px;height:258px;overflow:hidden">
<div class="abs" style="left:9.5px;top:66.8px;width:264.200px;height:41px;border-radius:4.500px;background:rgba(250,250,253,.62)"></div>
<span class="t" style="left:55.80px;top:-6.72px;font-size:9.60px;line-height:12px;letter-spacing:-1.114px;color:#1d1d22;">Encrypt Files</span>
<span class="t" style="left:55.80px;top:6.21px;font-size:8.10px;line-height:11px;letter-spacing:-0.208px;color:#74767e;">Encrypts and decrypts files and folders</span>
<div class="abs" style="left:58.5px;top:25.3px;width:209px;height:.7px;background:#cfd1da"></div>
<span class="t" style="left:55.80px;top:34.06px;font-size:9.60px;line-height:12px;letter-spacing:-0.664px;color:#1d1d22;">Energy Saver</span>
<span class="t" style="left:55.80px;top:46.99px;font-size:8.10px;line-height:11px;letter-spacing:-0.231px;color:#74767e;">Enables settings that optimize power consumption</span>
<span class="t" style="left:55.80px;top:74.84px;font-size:9.60px;line-height:12px;letter-spacing:-0.424px;color:#1d1d22;">Find Duplicates</span>
<span class="t" style="left:55.80px;top:87.77px;font-size:8.10px;line-height:11px;letter-spacing:-0.241px;color:#74767e;">Finds duplicate files on your Mac</span>
<span class="t" style="left:55.80px;top:115.62px;font-size:9.60px;line-height:12px;letter-spacing:-0.520px;color:#1d1d22;">Focus on Window</span>
<span class="t" style="left:55.80px;top:128.55px;font-size:8.10px;line-height:11px;letter-spacing:-0.261px;color:#74767e;">Dims all windows except the active one</span>
<div class="abs" style="left:58.5px;top:148.0px;width:209px;height:.7px;background:#cfd1da"></div>
<span class="t" style="left:55.80px;top:156.40px;font-size:9.60px;line-height:12px;letter-spacing:-0.598px;color:#1d1d22;">Free Memory</span>
<span class="t" style="left:55.80px;top:169.33px;font-size:8.10px;line-height:11px;letter-spacing:-0.354px;color:#74767e;">Frees up unused memory</span>
<div class="abs" style="left:58.5px;top:188.9px;width:209px;height:.7px;background:#cfd1da"></div>
<span class="t" style="left:55.80px;top:197.18px;font-size:9.60px;line-height:12px;letter-spacing:-0.497px;color:#1d1d22;">Hidden Files</span>
<span class="t" style="left:55.80px;top:210.11px;font-size:8.10px;line-height:11px;letter-spacing:-0.261px;color:#74767e;">Shows or conceals hidden files and folders</span>
<div class="abs" style="left:58.5px;top:229.8px;width:209px;height:.7px;background:#cfd1da"></div>
<span class="t" style="left:55.80px;top:237.96px;font-size:9.60px;line-height:12px;letter-spacing:-0.465px;color:#1d1d22;">Hide Desktop Files</span>
<span class="t" style="left:55.80px;top:250.89px;font-size:8.10px;line-height:11px;letter-spacing:-0.254px;color:#74767e;">Hides icons on the Desktop</span>
<svg style="left:17.00px;top:-7.70px" width="28.00" height="28.00" viewBox="0 0 28 28"><rect x="2.500" y="4" width="19" height="22" rx="1.500" fill="#f4f4f4" stroke="#c8c8c8" stroke-width=".6"/><text x="4" y="14" font-size="5.500" fill="#bbb" font-family="Liberation Sans,sans-serif">0</text><text x="4" y="22.500" font-size="5.500" fill="#bbb" font-family="Liberation Sans,sans-serif" letter-spacing="1.200">101</text><circle cx="22.300" cy="12" r="4.200" fill="#f0a81e"/><circle cx="23.500" cy="12" r="1.300" fill="#fce7a8"/><path d="M9.500 10.500h10v3h-10z" fill="#f0a81e"/></svg>
<svg style="left:19.00px;top:32.80px" width="22.00" height="30.00" viewBox="0 0 22 30"><defs><linearGradient id="eg" x1="0" y1="0" x2="0" y2="1"><stop offset="0" stop-color="#8be04a"/><stop offset="1" stop-color="#3fae1a"/></linearGradient></defs><rect x="7" y=".5" width="7" height="3" rx="1" fill="#c9c9c9"/><rect x="2" y="2.500" width="17.500" height="24.500" rx="2.500" fill="#dcdcdc" stroke="#b5b5b5" stroke-width=".6"/><rect x="2.700" y="5.200" width="16.100" height="21.200" rx="1.800" fill="url(#eg)"/><path d="M12.300 9.500 7.300 16.800h3.200l-1.400 5.700 5.300-7.600h-3.300z" fill="#2a3b1a"/></svg>
<svg style="left:15.50px;top:73.30px" width="30.00" height="30.00" viewBox="0 0 30 30"><circle cx="13.200" cy="13.600" r="9.400" fill="#cfd0d4" stroke="#2b2b2e" stroke-width="1.500"/><path d="M20.100 20.500 25.500 25.900" stroke="#2b2b2e" stroke-width="2.400" stroke-linecap="round"/><rect x="8.800" y="9.800" width="6" height="8" rx=".8" fill="#f4f4f4" stroke="#aaa" stroke-width=".4"/><rect x="11.400" y="8.200" width="6" height="8" rx=".8" fill="#fff" stroke="#aaa" stroke-width=".4"/></svg>
<svg style="left:17.00px;top:115.80px" width="27.00" height="25.00" viewBox="0 0 27 25"><rect x=".5" y=".5" width="26" height="24" rx="1.200" fill="#3a3a3c"/><rect x="3.800" y="3.800" width="19.400" height="12.700" rx=".8" fill="#ececec"/><rect x="3.800" y="3.800" width="19.400" height="2.600" fill="#c9c9c9"/><circle cx="5.400" cy="5.100" r=".7" fill="#e8524a"/><circle cx="7.400" cy="5.100" r=".7" fill="#e8b43a"/><circle cx="9.400" cy="5.100" r=".7" fill="#5cc04a"/><rect x="6.500" y="8.500" width="6" height="5.500" fill="#c4c4c4"/><g fill="#77777a"><rect x="5" y="19" width="3.200" height="3.200" rx=".6"/><rect x="9.800" y="19" width="3.200" height="3.200" rx=".6"/><rect x="14.600" y="19" width="3.200" height="3.200" rx=".6"/><rect x="19.400" y="19" width="3.200" height="3.200" rx=".6"/></g></svg>
<svg style="left:15.50px;top:160.30px" width="30.00" height="19.00" viewBox="0 0 30 19"><rect x=".8" y="2" width="28.400" height="12.500" rx="1.500" fill="#6cc62e" stroke="#3e8e14" stroke-width=".7"/><rect x="1.800" y="14.500" width="26.400" height="2.600" fill="#4a9a1a"/><g fill="#234d12"><rect x="4" y="4.500" width="4.300" height="7.500" rx=".6"/><rect x="10.200" y="4.500" width="4.300" height="7.500" rx=".6"/><rect x="16.400" y="4.500" width="4.300" height="7.500" rx=".6"/><rect x="22.600" y="4.500" width="4.300" height="7.500" rx=".6"/></g></svg>
<svg style="left:16.50px;top:194.70px" width="28.00" height="30.00" viewBox="0 0 28 30"><path d="M5.500 1.500h12l6 6v20.500h-18z" fill="#f6f6f6" stroke="#8a8a8a" stroke-width=".9" stroke-dasharray="1.600 1.400"/><path d="M17.500 1.500v6h6z" fill="#9a9a9a"/><path d="M1.200 14.300c2.600-4.200 8.600-4.200 11.200 0-2.600 4.200-8.600 4.200-11.200 0z" fill="#1c1c1c"/><circle cx="6.800" cy="14.300" r="2.100" fill="#f6f6f6"/><circle cx="6.800" cy="14.300" r="1.150" fill="#1c1c1c"/></svg>
<svg style="left:16.50px;top:239.30px" width="28.00" height="20.00" viewBox="0 0 28 20"><rect x=".5" y=".5" width="27" height="19" rx=".8" fill="#1e9cf0" stroke="#3a4652" stroke-width="1"/><path d="M7.500 9.500c2.500-3.600 10.500-3.600 13 0-2.500 3.600-10.500 3.600-13 0z" fill="#fff"/><circle cx="14" cy="9.500" r="1.900" fill="#1e9cf0"/><path d="M16.500 5.500 11.500 13.500" stroke="#1e9cf0" stroke-width="1.300"/></svg>
<svg style="left:252.50px;top:81.30px" width="12.00" height="12.00" viewBox="0 0 12 12"><polygon points="6.30,1.30 7.61,4.80 11.34,4.96 8.42,7.29 9.42,10.89 6.30,8.83 3.18,10.89 4.18,7.29 1.26,4.96 4.99,4.80" fill="none" stroke="#55555e" stroke-width=".9" stroke-linejoin="miter"/></svg>
<svg style="left:252.50px;top:163.30px" width="12.00" height="12.00" viewBox="0 0 12 12"><polygon points="6.30,1.30 7.61,4.80 11.34,4.96 8.42,7.29 9.42,10.89 6.30,8.83 3.18,10.89 4.18,7.29 1.26,4.96 4.99,4.80" fill="#5c5c66"/></svg>
</div>
<div class="abs" style="left:0;top:320.200px;width:293px;height:21px;background:#f0e6f0"></div>
<div class="abs" style="left:0;top:320px;width:293px;height:.6px;background:#d9cfdb"></div>
<div class="abs" style="left:123.5px;top:325.5px;width:1.500px;height:9.500px;background:#d8262c"></div>
<div class="abs" style="left:126.5px;top:325.5px;width:1.500px;height:9.500px;background:#d8262c"></div>
<span class="t" style="left:130.00px;top:323.62px;font-size:10.20px;line-height:13px;letter-spacing:-0.552px;font-weight:bold;color:#151518;">Parallels</span>
<span class="t" style="left:167.10px;top:324.34px;font-size:3.50px;line-height:5px;color:#151518;">®</span>
</div>
<div id="fw" class="win">
<div class="abs" style="left:0;top:0;width:165.500px;height:278px;background:#e5e8e4"></div>
<div class="abs" style="left:165.500px;top:0;width:.6px;height:278px;background:#d9dad7"></div>
<div class="abs" style="left:166px;top:0;width:421px;height:34px;background:#e9ebe8"></div>
<div class="abs" style="left:166px;top:33.700px;width:421px;height:.6px;background:#e0e1de"></div>
<div class="abs" style="left:12.2px;top:12.5px;width:8.600px;height:8.600px;border-radius:50%;background:#d1d2cf;box-shadow:inset 0 0 0 .5px rgba(0,0,0,.05)"></div>
<div class="abs" style="left:24.9px;top:12.5px;width:8.600px;height:8.600px;border-radius:50%;background:#d1d2cf;box-shadow:inset 0 0 0 .5px rgba(0,0,0,.05)"></div>
<div class="abs" style="left:37.6px;top:12.5px;width:8.600px;height:8.600px;border-radius:50%;background:#d1d2cf;box-shadow:inset 0 0 0 .5px rgba(0,0,0,.05)"></div>
<div class="abs" style="left:159.0px;top:35.8px;width:4.400px;height:154px;border-radius:2.200px;background:#b9bab7"></div>
<span class="t" style="left:10.10px;top:36.59px;font-size:7.60px;line-height:10px;letter-spacing:-0.244px;font-weight:bold;color:#a7a8a5;">Favorites</span>
<div class="abs" style="left:6.4px;top:117.5px;width:143px;height:17.700px;border-radius:4.500px;background:#d1d3cf"></div>
<span class="t" style="left:25.60px;top:49.31px;font-size:9.30px;line-height:12px;letter-spacing:-0.289px;color:#a9aaa7;">AirDrop</span>
<svg style="left:11.50px;top:50.50px" width="9.40" height="9.40" viewBox="0 0 11 11"><circle cx="5.500" cy="5.500" r="5.300" fill="#9fc2ea"/><path d="M2.600 9.200a3.700 3.700 0 1 1 5.800 0M4 8a2.100 2.100 0 1 1 3 0" fill="none" stroke="#e5e8e4" stroke-width=".9"/><circle cx="5.500" cy="6.600" r=".8" fill="#e5e8e4"/></svg>
<span class="t" style="left:25.60px;top:67.11px;font-size:9.30px;line-height:12px;letter-spacing:-0.388px;color:#a9aaa7;">Recents</span>
<svg style="left:11.50px;top:68.30px" width="9.40" height="9.40" viewBox="0 0 11 11"><circle cx="5.500" cy="5.500" r="4.600" fill="none" stroke="#9fc2ea" stroke-width="1"/><path d="M5.500 2.800v2.900h2.300" fill="none" stroke="#9fc2ea" stroke-width="1" stroke-linecap="round"/></svg>
<span class="t" style="left:25.60px;top:84.91px;font-size:9.30px;line-height:12px;letter-spacing:-0.212px;color:#a9aaa7;">Applications</span>
<svg style="left:11.50px;top:86.10px" width="9.40" height="9.40" viewBox="0 0 11 11"><path d="M5.500 1.200 2 9.300M5.500 1.200 9 9.300M.8 7h9.400" fill="none" stroke="#9fc2ea" stroke-width="1.100" stroke-linecap="round"/></svg>
<span class="t" style="left:25.60px;top:102.71px;font-size:9.30px;line-height:12px;letter-spacing:-0.302px;color:#a9aaa7;">Desktop</span>
<svg style="left:11.50px;top:103.90px" width="9.40" height="9.40" viewBox="0 0 11 11"><rect x=".6" y="1.500" width="9.800" height="7.200" rx="1.200" fill="none" stroke="#9fc2ea" stroke-width="1"/><rect x="1.600" y="6.200" width="7.800" height="1.800" fill="#9fc2ea"/></svg>
<span class="t" style="left:25.60px;top:120.71px;font-size:9.30px;line-height:12px;letter-spacing:-0.337px;color:#a9aaa7;">Documents</span>
<svg style="left:11.50px;top:121.90px" width="9.40" height="9.40" viewBox="0 0 11 11"><path d="M2.300 .8h4l2.700 2.700v6.700h-6.700z" fill="none" stroke="#9fc2ea" stroke-width="1" stroke-linejoin="round"/><path d="M6.200 1v2.600h2.600" fill="none" stroke="#9fc2ea" stroke-width=".8"/></svg>
<span class="t" style="left:25.60px;top:138.81px;font-size:9.30px;line-height:12px;letter-spacing:-0.368px;color:#a9aaa7;">Downloads</span>
<svg style="left:11.50px;top:140.00px" width="9.40" height="9.40" viewBox="0 0 11 11"><circle cx="5.500" cy="5.500" r="4.600" fill="none" stroke="#9fc2ea" stroke-width="1"/><path d="M5.500 3v4.600M3.600 5.900l1.900 1.900 1.900-1.900" fill="none" stroke="#9fc2ea" stroke-width="1" stroke-linecap="round" stroke-linejoin="round"/></svg>
<span class="t" style="left:25.60px;top:156.31px;font-size:9.30px;line-height:12px;letter-spacing:-0.262px;color:#a9aaa7;">Toolbox screenshots</span>
<svg style="left:11.50px;top:157.50px" width="9.40" height="9.40" viewBox="0 0 11 11"><path d="M.7 2.600a1 1 0 0 1 1-1h2.500l1 1.100h4.100a1 1 0 0 1 1 1v5a1 1 0 0 1-1 1h-7.600a1 1 0 0 1-1-1z" fill="none" stroke="#9fc2ea" stroke-width="1"/><path d="M.7 4.300h9.600" stroke="#9fc2ea" stroke-width=".8"/></svg>
<span class="t" style="left:10.10px;top:181.99px;font-size:7.60px;line-height:10px;letter-spacing:-0.277px;font-weight:bold;color:#a7a8a5;">Locations</span>
<span class="t" style="left:25.60px;top:194.71px;font-size:9.30px;line-height:12px;letter-spacing:-0.279px;color:#a9aaa7;">iCloud Drive</span>
<svg style="left:11.50px;top:195.90px" width="9.40" height="9.40" viewBox="0 0 11 11"><path d="M3 9.200a2.300 2.300 0 0 1-.3-4.600 3.100 3.100 0 0 1 6-.6 2.600 2.600 0 0 1 .2 5.200z" fill="none" stroke="#b9bab7" stroke-width="1"/></svg>
<span class="t" style="left:25.60px;top:212.51px;font-size:9.30px;line-height:12px;letter-spacing:-0.325px;color:#a9aaa7;">Macintosh HD</span>
<svg style="left:11.50px;top:213.70px" width="9.40" height="9.40" viewBox="0 0 11 11"><path d="M1 6.200 2.600 2.300h5.800l1.600 3.900v2.500h-9z" fill="none" stroke="#b9bab7" stroke-width="1" stroke-linejoin="round"/><path d="M1 6.200h9" stroke="#b9bab7" stroke-width=".9"/></svg>
<span class="t" style="left:25.60px;top:230.31px;font-size:9.30px;line-height:12px;letter-spacing:-0.244px;color:#a9aaa7;">Network</span>
<svg style="left:11.50px;top:231.50px" width="9.40" height="9.40" viewBox="0 0 11 11"><circle cx="5.500" cy="5.500" r="4.600" fill="none" stroke="#b9bab7" stroke-width="1"/><ellipse cx="5.500" cy="5.500" rx="2.100" ry="4.600" fill="none" stroke="#b9bab7" stroke-width=".8"/><path d="M1 5.500h9M1.800 3.200h7.400M1.800 7.800h7.400" stroke="#b9bab7" stroke-width=".7"/></svg>
<span class="t" style="left:10.10px;top:256.29px;font-size:7.60px;line-height:10px;letter-spacing:-0.344px;font-weight:bold;color:#a7a8a5;">Tags</span>
<span class="t" style="left:25.60px;top:268.81px;font-size:9.30px;line-height:12px;letter-spacing:-0.520px;color:#a9aaa7;">Red</span>
<div class="abs" style="left:13.3px;top:271.7px;width:6.400px;height:6.400px;border-radius:50%;background:#f29c97"></div>
<svg style="left:179.00px;top:11.00px" width="10.00" height="12.00" viewBox="0 0 10 12"><path d="M6.800 1.500 2.500 6l4.300 4.500" fill="none" stroke="#8b8c89" stroke-width="1.300" stroke-linecap="round" stroke-linejoin="round"/></svg>
<svg style="left:202.00px;top:11.00px" width="10.00" height="12.00" viewBox="0 0 10 12"><path d="M3.200 1.500 7.500 6l-4.300 4.500" fill="none" stroke="#c6c7c4" stroke-width="1.300" stroke-linecap="round" stroke-linejoin="round"/></svg>
<span class="t" style="left:222.20px;top:10.42px;font-size:10.00px;line-height:13px;letter-spacing:-0.284px;font-weight:bold;color:#999a97;">Documents</span>
<svg style="left:370.80px;top:11.50px" width="14.00" height="11.00" viewBox="0 0 14 11"><rect x=".5" y=".5" width="12.600" height="9.800" rx="1.600" fill="none" stroke="#8f908d" stroke-width="1"/><path d="M4.700 .5v9.800M8.900 .5v9.800" stroke="#8f908d" stroke-width="1"/></svg>
<svg style="left:388.50px;top:12.00px" width="6.00" height="10.00" viewBox="0 0 6 10"><path d="M1 3.500 3 1.500l2 2M1 6.500l2 2 2-2" fill="none" stroke="#8f908d" stroke-width="1" stroke-linecap="round" stroke-linejoin="round"/></svg>
<svg style="left:425.50px;top:10.80px" width="13.00" height="13.00" viewBox="0 0 13 13"><rect x="0.5" y="0.5" width="3" height="3" rx=".8" fill="none" stroke="#8f908d" stroke-width=".8"/><rect x="0.5" y="4.7" width="3" height="3" rx=".8" fill="none" stroke="#8f908d" stroke-width=".8"/><rect x="0.5" y="8.9" width="3" height="3" rx=".8" fill="none" stroke="#8f908d" stroke-width=".8"/><rect x="4.7" y="0.5" width="3" height="3" rx=".8" fill="none" stroke="#8f908d" stroke-width=".8"/><rect x="4.7" y="4.7" width="3" height="3" rx=".8" fill="none" stroke="#8f908d" stroke-width=".8"/><rect x="4.7" y="8.9" width="3" height="3" rx=".8" fill="none" stroke="#8f908d" stroke-width=".8"/><rect x="8.9" y="0.5" width="3" height="3" rx=".8" fill="none" stroke="#8f908d" stroke-width=".8"/><rect x="8.9" y="4.7" width="3" height="3" rx=".8" fill="none" stroke="#8f908d" stroke-width=".8"/><rect x="8.9" y="8.9" width="3" height="3" rx=".8" fill="none" stroke="#8f908d" stroke-width=".8"/></svg>
<svg style="left:442.00px;top:15.00px" width="7.00" height="5.00" viewBox="0 0 7 5"><path d="M1 1l2.500 2.500L6 1" fill="none" stroke="#8f908d" stroke-width="1" stroke-linecap="round" stroke-linejoin="round"/></svg>
<svg style="left:461.50px;top:9.50px" width="12.00" height="14.00" viewBox="0 0 12 14"><path d="M3.600 5h-1.600a1 1 0 0 0-1 1v6a1 1 0 0 0 1 1h7a1 1 0 0 0 1-1v-6a1 1 0 0 0-1-1h-1.600" fill="none" stroke="#8f908d" stroke-width="1"/><path d="M5.500 8.500v-7.500M3.300 3 5.500.8 7.700 3" fill="none" stroke="#8f908d" stroke-width="1" stroke-linecap="round" stroke-linejoin="round"/></svg>
<svg style="left:485.50px;top:10.50px" width="14.00" height="13.00" viewBox="0 0 14 13"><path d="M7.200 1h4.300a1 1 0 0 1 1 1v4.300l-6 6a1 1 0 0 1-1.400 0l-3.900-3.900a1 1 0 0 1 0-1.400z" fill="none" stroke="#8f908d" stroke-width="1" stroke-linejoin="round"/><circle cx="10" cy="3.600" r=".9" fill="#8f908d"/></svg>
<svg style="left:513.00px;top:10.80px" width="12.00" height="12.00" viewBox="0 0 12 12"><circle cx="6" cy="6" r="5.300" fill="none" stroke="#8f908d" stroke-width="1"/><circle cx="3.500" cy="6" r=".75" fill="#8f908d"/><circle cx="6" cy="6" r=".75" fill="#8f908d"/><circle cx="8.500" cy="6" r=".75" fill="#8f908d"/></svg>
<svg style="left:528.50px;top:15.00px" width="7.00" height="5.00" viewBox="0 0 7 5"><path d="M1 1l2.500 2.500L6 1" fill="none" stroke="#8f908d" stroke-width="1" stroke-linecap="round" stroke-linejoin="round"/></svg>
<svg style="left:564.00px;top:11.00px" width="12.00" height="12.00" viewBox="0 0 12 12"><circle cx="4.800" cy="4.800" r="3.800" fill="none" stroke="#8f908d" stroke-width="1.100"/><path d="M7.600 7.600l3.400 3.400" stroke="#8f908d" stroke-width="1.200" stroke-linecap="round"/></svg>
<div class="abs" style="left:312.8px;top:34.0px;width:.6px;height:244px;background:#e4e4e4"></div>
<div class="abs" style="left:322.3px;top:34.0px;width:.6px;height:244px;background:#e4e4e4"></div>
<div class="abs" style="left:315.9px;top:35.5px;width:4.400px;height:157px;border-radius:2.200px;background:#bcbcbc"></div>
<div class="abs" style="left:317.0px;top:272.0px;width:.7px;height:4px;background:#aaa"></div>
<div class="abs" style="left:318.8px;top:272.0px;width:.7px;height:4px;background:#aaa"></div>
<div class="abs" style="left:172.3px;top:178.3px;width:134px;height:13.400px;border-radius:3.500px;background:#dcdcdc"></div>
<span class="t" style="left:189.80px;top:38.41px;font-size:9.30px;line-height:12px;letter-spacing:-0.278px;color:#1f1f1f;">_temp_matl...2023a_win64</span>
<svg style="left:176.10px;top:39.60px" width="10.30" height="9.40" viewBox="0 0 13.2 12"><path d="M.6 2.300a1.300 1.300 0 0 1 1.300-1.300h3.100l1.300 1.300h5a1.300 1.300 0 0 1 1.300 1.300v.9h-12z" fill="#3aa0e6"/><rect x=".6" y="3.300" width="12" height="7.700" rx="1.200" fill="#5cbcf6"/><path d="M.6 4.500h12" stroke="#8fd2fa" stroke-width=".5"/></svg>
<svg style="left:299.50px;top:41.80px" width="4.00" height="5.00" viewBox="0 0 4 5"><path d="M1 .7 2.900 2.500 1 4.300" fill="none" stroke="#a4a4a4" stroke-width=".85" stroke-linecap="round" stroke-linejoin="round"/></svg>
<span class="t" style="left:189.80px;top:52.46px;font-size:9.30px;line-height:12px;letter-spacing:-0.435px;color:#1f1f1f;">22621.1702....RE_en-us.iso</span>
<svg style="left:176.50px;top:52.36px" width="10.00" height="12.00" viewBox="0 0 10 12"><path d="M1 .5h5.500l2.500 2.500v8.500h-8z" fill="#fafafa" stroke="#c4c4c4" stroke-width=".5"/><path d="M3.200 8.600h3.600l-.6-1.600h-2.400zM4.100 6.300h1.800" fill="#777" stroke="#777" stroke-width=".4"/></svg>
<span class="t" style="left:189.80px;top:66.52px;font-size:9.30px;line-height:12px;letter-spacing:-0.579px;color:#1f1f1f;">ArcGIS</span>
<svg style="left:176.10px;top:67.71px" width="10.30" height="9.40" viewBox="0 0 13.2 12"><path d="M.6 2.300a1.300 1.300 0 0 1 1.300-1.300h3.100l1.300 1.300h5a1.300 1.300 0 0 1 1.300 1.300v.9h-12z" fill="#3aa0e6"/><rect x=".6" y="3.300" width="12" height="7.700" rx="1.200" fill="#5cbcf6"/><path d="M.6 4.500h12" stroke="#8fd2fa" stroke-width=".5"/></svg>
<svg style="left:299.50px;top:69.91px" width="4.00" height="5.00" viewBox="0 0 4 5"><path d="M1 .7 2.900 2.500 1 4.300" fill="none" stroke="#a4a4a4" stroke-width=".85" stroke-linecap="round" stroke-linejoin="round"/></svg>
<span class="t" style="left:189.80px;top:80.57px;font-size:9.30px;line-height:12px;letter-spacing:-0.357px;color:#1f1f1f;">ArcGIS CityEngine 2023.0</span>
<svg style="left:176.10px;top:81.77px" width="10.30" height="9.40" viewBox="0 0 13.2 12"><path d="M.6 2.300a1.300 1.300 0 0 1 1.300-1.300h3.100l1.300 1.300h5a1.300 1.300 0 0 1 1.300 1.300v.9h-12z" fill="#3aa0e6"/><rect x=".6" y="3.300" width="12" height="7.700" rx="1.200" fill="#5cbcf6"/><path d="M.6 4.500h12" stroke="#8fd2fa" stroke-width=".5"/></svg>
<svg style="left:299.50px;top:83.97px" width="4.00" height="5.00" viewBox="0 0 4 5"><path d="M1 .7 2.900 2.500 1 4.300" fill="none" stroke="#a4a4a4" stroke-width=".85" stroke-linecap="round" stroke-linejoin="round"/></svg>
<span class="t" style="left:189.80px;top:94.63px;font-size:9.30px;line-height:12px;letter-spacing:-0.539px;color:#1f1f1f;">ArcGIS Pro 3.1</span>
<svg style="left:176.10px;top:95.82px" width="10.30" height="9.40" viewBox="0 0 13.2 12"><path d="M.6 2.300a1.300 1.300 0 0 1 1.300-1.300h3.100l1.300 1.300h5a1.300 1.300 0 0 1 1.300 1.300v.9h-12z" fill="#3aa0e6"/><rect x=".6" y="3.300" width="12" height="7.700" rx="1.200" fill="#5cbcf6"/><path d="M.6 4.500h12" stroke="#8fd2fa" stroke-width=".5"/></svg>
<svg style="left:299.50px;top:98.02px" width="4.00" height="5.00" viewBox="0 0 4 5"><path d="M1 .7 2.900 2.500 1 4.300" fill="none" stroke="#a4a4a4" stroke-width=".85" stroke-linecap="round" stroke-linejoin="round"/></svg>
<span class="t" style="left:189.80px;top:108.68px;font-size:9.30px;line-height:12px;letter-spacing:-0.324px;color:#1f1f1f;">Assigment</span>
<svg style="left:176.10px;top:109.88px" width="10.30" height="9.40" viewBox="0 0 13.2 12"><path d="M.6 2.300a1.300 1.300 0 0 1 1.300-1.300h3.100l1.300 1.300h5a1.300 1.300 0 0 1 1.300 1.300v.9h-12z" fill="#3aa0e6"/><rect x=".6" y="3.300" width="12" height="7.700" rx="1.200" fill="#5cbcf6"/><path d="M.6 4.500h12" stroke="#8fd2fa" stroke-width=".5"/></svg>
<svg style="left:299.50px;top:112.08px" width="4.00" height="5.00" viewBox="0 0 4 5"><path d="M1 .7 2.900 2.500 1 4.300" fill="none" stroke="#a4a4a4" stroke-width=".85" stroke-linecap="round" stroke-linejoin="round"/></svg>
<span class="t" style="left:189.80px;top:122.74px;font-size:9.30px;line-height:12px;letter-spacing:-0.482px;color:#1f1f1f;">CnCRemastered</span>
<svg style="left:176.10px;top:123.93px" width="10.30" height="9.40" viewBox="0 0 13.2 12"><path d="M.6 2.300a1.300 1.300 0 0 1 1.300-1.300h3.100l1.300 1.300h5a1.300 1.300 0 0 1 1.300 1.300v.9h-12z" fill="#3aa0e6"/><rect x=".6" y="3.300" width="12" height="7.700" rx="1.200" fill="#5cbcf6"/><path d="M.6 4.500h12" stroke="#8fd2fa" stroke-width=".5"/></svg>
<svg style="left:299.50px;top:126.13px" width="4.00" height="5.00" viewBox="0 0 4 5"><path d="M1 .7 2.900 2.500 1 4.300" fill="none" stroke="#a4a4a4" stroke-width=".85" stroke-linecap="round" stroke-linejoin="round"/></svg>
<span class="t" style="left:189.80px;top:136.79px;font-size:9.30px;line-height:12px;letter-spacing:-0.263px;color:#1f1f1f;">Custom Office Templates</span>
<svg style="left:176.10px;top:137.98px" width="10.30" height="9.40" viewBox="0 0 13.2 12"><path d="M.6 2.300a1.300 1.300 0 0 1 1.300-1.300h3.100l1.300 1.300h5a1.300 1.300 0 0 1 1.300 1.300v.9h-12z" fill="#3aa0e6"/><rect x=".6" y="3.300" width="12" height="7.700" rx="1.200" fill="#5cbcf6"/><path d="M.6 4.500h12" stroke="#8fd2fa" stroke-width=".5"/></svg>
<svg style="left:299.50px;top:140.18px" width="4.00" height="5.00" viewBox="0 0 4 5"><path d="M1 .7 2.900 2.500 1 4.300" fill="none" stroke="#a4a4a4" stroke-width=".85" stroke-linecap="round" stroke-linejoin="round"/></svg>
<span class="t" style="left:189.80px;top:150.85px;font-size:9.30px;line-height:12px;letter-spacing:-0.337px;color:#1f1f1f;">Documents</span>
<svg style="left:176.10px;top:152.04px" width="10.30" height="9.40" viewBox="0 0 13.2 12"><path d="M.6 2.300a1.300 1.300 0 0 1 1.300-1.300h3.100l1.300 1.300h5a1.300 1.300 0 0 1 1.300 1.300v.9h-12z" fill="#3aa0e6"/><rect x=".6" y="3.300" width="12" height="7.700" rx="1.200" fill="#5cbcf6"/><path d="M.6 4.500h12" stroke="#8fd2fa" stroke-width=".5"/></svg>
<svg style="left:299.50px;top:154.24px" width="4.00" height="5.00" viewBox="0 0 4 5"><path d="M1 .7 2.900 2.500 1 4.300" fill="none" stroke="#a4a4a4" stroke-width=".85" stroke-linecap="round" stroke-linejoin="round"/></svg>
<span class="t" style="left:189.80px;top:164.90px;font-size:9.30px;line-height:12px;letter-spacing:-0.346px;color:#1f1f1f;">Embroidery Designs</span>
<svg style="left:176.10px;top:166.09px" width="10.30" height="9.40" viewBox="0 0 13.2 12"><path d="M.6 2.300a1.300 1.300 0 0 1 1.300-1.300h3.100l1.300 1.300h5a1.300 1.300 0 0 1 1.300 1.300v.9h-12z" fill="#3aa0e6"/><rect x=".6" y="3.300" width="12" height="7.700" rx="1.200" fill="#5cbcf6"/><path d="M.6 4.500h12" stroke="#8fd2fa" stroke-width=".5"/></svg>
<svg style="left:299.50px;top:168.29px" width="4.00" height="5.00" viewBox="0 0 4 5"><path d="M1 .7 2.900 2.500 1 4.300" fill="none" stroke="#a4a4a4" stroke-width=".85" stroke-linecap="round" stroke-linejoin="round"/></svg>
<span class="t" style="left:189.80px;top:178.96px;font-size:9.30px;line-height:12px;letter-spacing:-0.233px;color:#1f1f1f;">FourthCoffe...ials 2022.xlsx</span>
<svg style="left:175.50px;top:179.85px" width="12.00" height="10.00" viewBox="0 0 12 10"><rect x="3.500" y=".5" width="8" height="9" rx=".8" fill="#fff" stroke="#b9c9bd" stroke-width=".5"/><rect x=".5" y="2" width="6.500" height="6" rx=".8" fill="#1e7a45"/><path d="M2.300 3.600l2.900 2.800M5.200 3.600 2.300 6.400" stroke="#fff" stroke-width=".8"/><path d="M8.200 3.300l1.700 1.700-1.700 1.700z" fill="#2aa05a"/></svg>
<span class="t" style="left:189.80px;top:193.01px;font-size:9.30px;line-height:12px;letter-spacing:-0.343px;color:#1f1f1f;">Images 2022</span>
<svg style="left:176.10px;top:194.20px" width="10.30" height="9.40" viewBox="0 0 13.2 12"><path d="M.6 2.300a1.300 1.300 0 0 1 1.300-1.300h3.100l1.300 1.300h5a1.300 1.300 0 0 1 1.300 1.300v.9h-12z" fill="#3aa0e6"/><rect x=".6" y="3.300" width="12" height="7.700" rx="1.200" fill="#5cbcf6"/><path d="M.6 4.500h12" stroke="#8fd2fa" stroke-width=".5"/></svg>
<svg style="left:299.50px;top:196.40px" width="4.00" height="5.00" viewBox="0 0 4 5"><path d="M1 .7 2.900 2.500 1 4.300" fill="none" stroke="#a4a4a4" stroke-width=".85" stroke-linecap="round" stroke-linejoin="round"/></svg>
<span class="t" style="left:189.80px;top:207.07px;font-size:9.30px;line-height:12px;letter-spacing:-0.271px;color:#1f1f1f;">KingsoftData</span>
<svg style="left:176.10px;top:208.26px" width="10.30" height="9.40" viewBox="0 0 13.2 12"><path d="M.6 2.300a1.300 1.300 0 0 1 1.300-1.300h3.100l1.300 1.300h5a1.300 1.300 0 0 1 1.300 1.300v.9h-12z" fill="#3aa0e6"/><rect x=".6" y="3.300" width="12" height="7.700" rx="1.200" fill="#5cbcf6"/><path d="M.6 4.500h12" stroke="#8fd2fa" stroke-width=".5"/></svg>
<svg style="left:299.50px;top:210.46px" width="4.00" height="5.00" viewBox="0 0 4 5"><path d="M1 .7 2.900 2.500 1 4.300" fill="none" stroke="#a4a4a4" stroke-width=".85" stroke-linecap="round" stroke-linejoin="round"/></svg>
<span class="t" style="left:189.80px;top:221.12px;font-size:9.30px;line-height:12px;letter-spacing:-0.502px;color:#1f1f1f;">Loxone</span>
<svg style="left:176.10px;top:222.31px" width="10.30" height="9.40" viewBox="0 0 13.2 12"><path d="M.6 2.300a1.300 1.300 0 0 1 1.300-1.300h3.100l1.300 1.300h5a1.300 1.300 0 0 1 1.300 1.300v.9h-12z" fill="#3aa0e6"/><rect x=".6" y="3.300" width="12" height="7.700" rx="1.200" fill="#5cbcf6"/><path d="M.6 4.500h12" stroke="#8fd2fa" stroke-width=".5"/></svg>
<svg style="left:299.50px;top:224.51px" width="4.00" height="5.00" viewBox="0 0 4 5"><path d="M1 .7 2.900 2.500 1 4.300" fill="none" stroke="#a4a4a4" stroke-width=".85" stroke-linecap="round" stroke-linejoin="round"/></svg>
<span class="t" style="left:189.80px;top:235.18px;font-size:9.30px;line-height:12px;letter-spacing:-0.587px;color:#1f1f1f;">MATLAB</span>
<svg style="left:176.10px;top:236.37px" width="10.30" height="9.40" viewBox="0 0 13.2 12"><path d="M.6 2.300a1.300 1.300 0 0 1 1.300-1.300h3.100l1.300 1.300h5a1.300 1.300 0 0 1 1.300 1.300v.9h-12z" fill="#3aa0e6"/><rect x=".6" y="3.300" width="12" height="7.700" rx="1.200" fill="#5cbcf6"/><path d="M.6 4.500h12" stroke="#8fd2fa" stroke-width=".5"/></svg>
<svg style="left:299.50px;top:238.57px" width="4.00" height="5.00" viewBox="0 0 4 5"><path d="M1 .7 2.900 2.500 1 4.300" fill="none" stroke="#a4a4a4" stroke-width=".85" stroke-linecap="round" stroke-linejoin="round"/></svg>
<span class="t" style="left:189.80px;top:249.23px;font-size:9.30px;line-height:12px;letter-spacing:-0.379px;color:#1f1f1f;">matlab_R2023a_win64.exe</span>
<svg style="left:175.00px;top:249.12px" width="13.00" height="12.00" viewBox="0 0 13 12"><path d="M.5 7.500 4 5.500l1.800 1.600L8.300.8c1.200 2.500 2.300 6 4.200 9.200-1.600-.6-2.500-.2-3.700 1.500C7.800 9.800 6.500 8.600 5 8.500 3.600 8.500 2 8.300.5 7.500z" fill="#e0632a"/><path d="M.5 7.500 4 5.500l1.800 1.600-.8 1.400C3.600 8.500 2 8.300.5 7.500z" fill="#2c5f9e"/><path d="M8.300.8c1.200 2.500 2.300 6 4.200 9.200-1.600-.6-2.500-.2-3.700 1.500z" fill="#a8301c"/></svg>
<span class="t" style="left:189.80px;top:263.29px;font-size:9.30px;line-height:12px;letter-spacing:-0.201px;color:#1f1f1f;">My Articulate Projects</span>
<svg style="left:176.10px;top:264.48px" width="10.30" height="9.40" viewBox="0 0 13.2 12"><path d="M.6 2.300a1.300 1.300 0 0 1 1.300-1.300h3.100l1.300 1.300h5a1.300 1.300 0 0 1 1.300 1.300v.9h-12z" fill="#3aa0e6"/><rect x=".6" y="3.300" width="12" height="7.700" rx="1.200" fill="#5cbcf6"/><path d="M.6 4.500h12" stroke="#8fd2fa" stroke-width=".5"/></svg>
<svg style="left:299.50px;top:266.68px" width="4.00" height="5.00" viewBox="0 0 4 5"><path d="M1 .7 2.900 2.500 1 4.300" fill="none" stroke="#a4a4a4" stroke-width=".85" stroke-linecap="round" stroke-linejoin="round"/></svg>
<div class="abs" style="left:578.8px;top:34.0px;width:.6px;height:244px;background:#e8e8e8"></div>
<div class="abs" style="left:581.1px;top:36.0px;width:4.200px;height:240px;border-radius:2.100px;background:#c2c2c2"></div>
<svg style="left:396.8px;top:37.4px" width="106.8" height="135.8" viewBox="0 0 106.8 135.8"><defs><linearGradient id="dg641" x1="0" y1="0" x2="1" y2="1"><stop offset="0" stop-color="#f4f4f4"/><stop offset=".5" stop-color="#ededed"/><stop offset="1" stop-color="#f2f2f2"/></linearGradient><linearGradient id="df641" x1="0" y1="1" x2="1" y2="0"><stop offset="0" stop-color="#fdfdfd"/><stop offset="1" stop-color="#e0e0e0"/></linearGradient><clipPath id="rhc"><rect x="2" y="8" width="738" height="734"/></clipPath><filter id="ds641" x="-20%" y="-20%" width="140%" height="140%"><feGaussianBlur stdDeviation="2.200"/></filter></defs><path d="M11.0 6.0 h54.3 l33.5 33.5 v81.3 a3 3 0 0 1 -3 3 h-84.8 a3 3 0 0 1 -3 -3 v-111.8 a3 3 0 0 1 3 -3z" fill="#000" opacity=".33" filter="url(#ds641)" transform="translate(0,2.500)"/><path d="M11.0 6.0 h54.3 l33.5 33.5 v81.3 a3 3 0 0 1 -3 3 h-84.8 a3 3 0 0 1 -3 -3 v-111.8 a3 3 0 0 1 3 -3z" fill="url(#dg641)" stroke="#d0d0d0" stroke-width=".5"/><path d="M12 9.400h54" stroke="#a9a05a" stroke-width=".5"/><path d="M13.500 8.500h26" stroke="#6b6b3a" stroke-width=".7" stroke-dasharray="1.500 .6 3 .5 2 .7"/><path d="M65.3 6.0 v29.5 a4 4 0 0 0 4 4 h29.5 z" fill="#000" opacity=".18" filter="url(#ds641)" transform="translate(-1,2)"/><path d="M65.3 6.0 v29.5 a4 4 0 0 0 4 4 h29.5 z" fill="url(#df641)"/></svg>
<span class="t" style="left:429.50px;top:134.40px;font-size:17.70px;line-height:23px;letter-spacing:-1.066px;color:#6a6a6a;">XLSX</span>
<span class="t" style="left:329.20px;top:184.52px;font-size:10.30px;line-height:13px;letter-spacing:-0.325px;font-weight:bold;color:#1f1f1f;">FourthCoffeeFinancials 2022.xlsx</span>
<span class="t" style="left:329.20px;top:198.20px;font-size:9.00px;line-height:12px;letter-spacing:-0.157px;color:#8a8a8a;">Microsoft Excel Workbook (.xlsx) - 31 KB</span>
<span class="t" style="left:329.20px;top:214.10px;font-size:8.60px;line-height:11px;letter-spacing:-0.109px;font-weight:bold;color:#1f1f1f;">Information</span>
<div class="abs" style="left:322.4px;top:224.5px;width:256px;height:.7px;background:#e2e2e2"></div>
<svg style="left:445.20px;top:234.90px" width="10.00" height="10.00" viewBox="0 0 10 10"><circle cx="5" cy="5" r="4.300" fill="none" stroke="#8c8c8c" stroke-width=".8"/><circle cx="3" cy="5" r=".6" fill="#8c8c8c"/><circle cx="5" cy="5" r=".6" fill="#8c8c8c"/><circle cx="7" cy="5" r=".6" fill="#8c8c8c"/></svg>
<span class="t" style="left:438.90px;top:251.09px;font-size:7.60px;line-height:10px;letter-spacing:-0.179px;color:#8a8a8a;">More...</span>
</div>
<div id="dock">
<svg style="left:6.50px;top:6.50px" width="33.4" height="33.4" viewBox="0 0 100 100"><defs><linearGradient id="f0" x1="0" y1="0" x2="0" y2="1"><stop offset="0" stop-color="#2eb4fb"/><stop offset="1" stop-color="#1a84e8"/></linearGradient><clipPath id="ic0"><rect width="100" height="100" rx="22.500"/></clipPath></defs><g clip-path="url(#ic0)"><rect width="100" height="100" fill="url(#f0)"/><path d="M52 0h48v100H56c-4-14-6-28-6-40h9C58 38 56 20 52 0z" fill="#eef2f6"/><path d="M52 0c4 20 6 38 7 60h-9c0 12 2 26 6 40" fill="none" stroke="#1c3a5a" stroke-width="2.500"/><path d="M22 68c16 14 42 14 58 0" fill="none" stroke="#1c2e44" stroke-width="4" stroke-linecap="round"/><path d="M30 28v12M71 28v12" stroke="#1c2e44" stroke-width="4.500" stroke-linecap="round"/></g></svg>
<svg style="left:49.90px;top:6.50px" width="33.4" height="33.4" viewBox="0 0 100 100"><defs><clipPath id="ic1"><rect width="100" height="100" rx="22.500"/></clipPath></defs><g clip-path="url(#ic1)"><rect width="100" height="100" fill="#e9ebe3"/><rect x="16" y="16" width="19" height="19" rx="5" fill="#3fcf4a"/><rect x="41" y="16" width="19" height="19" rx="5" fill="#f6b21a"/><rect x="66" y="16" width="19" height="19" rx="5" fill="#f0802a"/><rect x="16" y="41" width="19" height="19" rx="5" fill="#e8302a"/><rect x="41" y="41" width="19" height="19" rx="5" fill="#9a9aa0"/><rect x="66" y="41" width="19" height="19" rx="5" fill="#f04a7a"/><rect x="16" y="66" width="19" height="19" rx="5" fill="#a04ae0"/><rect x="41" y="66" width="19" height="19" rx="5" fill="#2a9af0"/><rect x="66" y="66" width="19" height="19" rx="5" fill="#2ad0c0"/></g></svg>
<svg style="left:93.30px;top:6.50px" width="33.4" height="33.4" viewBox="0 0 100 100"><defs><linearGradient id="s0" x1="0" y1="0" x2="0" y2="1"><stop offset="0" stop-color="#fdfdfd"/><stop offset="1" stop-color="#e4e6ea"/></linearGradient><linearGradient id="s1" x1="0" y1="0" x2="0" y2="1"><stop offset="0" stop-color="#2ab8fa"/><stop offset="1" stop-color="#1a64e4"/></linearGradient><clipPath id="ic2"><rect width="100" height="100" rx="22.500"/></clipPath></defs><g clip-path="url(#ic2)"><rect width="100" height="100" fill="url(#s0)"/><circle cx="50" cy="50" r="42.500" fill="url(#s1)"/><path d="M50 10v6" stroke="#fff" stroke-opacity=".7" stroke-width="1" transform="rotate(0 50 50)"/><path d="M50 10v4" stroke="#fff" stroke-opacity=".7" stroke-width="1" transform="rotate(15 50 50)"/><path d="M50 10v6" stroke="#fff" stroke-opacity=".7" stroke-width="1" transform="rotate(30 50 50)"/><path d="M50 10v4" stroke="#fff" stroke-opacity=".7" stroke-width="1" transform="rotate(45 50 50)"/><path d="M50 10v6" stroke="#fff" stroke-opacity=".7" stroke-width="1" transform="rotate(60 50 50)"/><path d="M50 10v4" stroke="#fff" stroke-opacity=".7" stroke-width="1" transform="rotate(75 50 50)"/><path d="M50 10v6" stroke="#fff" stroke-opacity=".7" stroke-width="1" transform="rotate(90 50 50)"/><path d="M50 10v4" stroke="#fff" stroke-opacity=".7" stroke-width="1" transform="rotate(105 50 50)"/><path d="M50 10v6" stroke="#fff" stroke-opacity=".7" stroke-width="1" transform="rotate(120 50 50)"/><path d="M50 10v4" stroke="#fff" stroke-opacity=".7" stroke-width="1" transform="rotate(135 50 50)"/><path d="M50 10v6" stroke="#fff" stroke-opacity=".7" stroke-width="1" transform="rotate(150 50 50)"/><path d="M50 10v4" stroke="#fff" stroke-opacity=".7" stroke-width="1" transform="rotate(165 50 50)"/><path d="M50 10v6" stroke="#fff" stroke-opacity=".7" stroke-width="1" transform="rotate(180 50 50)"/><path d="M50 10v4" stroke="#fff" stroke-opacity=".7" stroke-width="1" transform="rotate(195 50 50)"/><path d="M50 10v6" stroke="#fff" stroke-opacity=".7" stroke-width="1" transform="rotate(210 50 50)"/><path d="M50 10v4" stroke="#fff" stroke-opacity=".7" stroke-width="1" transform="rotate(225 50 50)"/><path d="M50 10v6" stroke="#fff" stroke-opacity=".7" stroke-width="1" transform="rotate(240 50 50)"/><path d="M50 10v4" stroke="#fff" stroke-opacity=".7" stroke-width="1" transform="rotate(255 50 50)"/><path d="M50 10v6" stroke="#fff" stroke-opacity=".7" stroke-width="1" transform="rotate(270 50 50)"/><path d="M50 10v4" stroke="#fff" stroke-opacity=".7" stroke-width="1" transform="rotate(285 50 50)"/><path d="M50 10v6" stroke="#fff" stroke-opacity=".7" stroke-width="1" transform="rotate(300 50 50)"/><path d="M50 10v4" stroke="#fff" stroke-opacity=".7" stroke-width="1" transform="rotate(315 50 50)"/><path d="M50 10v6" stroke="#fff" stroke-opacity=".7" stroke-width="1" transform="rotate(330 50 50)"/><path d="M50 10v4" stroke="#fff" stroke-opacity=".7" stroke-width="1" transform="rotate(345 50 50)"/><path d="M80 20 45.500 45.500l9 9z" fill="#f2423a"/><path d="M20 80l34.500-25.500-9-9z" fill="#fdfdfd"/></g></svg>
<svg style="left:136.70px;top:6.50px" width="33.4" height="33.4" viewBox="0 0 100 100"><defs><linearGradient id="m0" x1="0" y1="0" x2="0" y2="1"><stop offset="0" stop-color="#5ff078"/><stop offset="1" stop-color="#0dbf3a"/></linearGradient><linearGradient id="m1" x1="0" y1="0" x2="0" y2="1"><stop offset="0" stop-color="#ffffff"/><stop offset="1" stop-color="#d8f2dc"/></linearGradient><clipPath id="ic3"><rect width="100" height="100" rx="22.500"/></clipPath></defs><g clip-path="url(#ic3)"><rect width="100" height="100" fill="url(#m0)"/><path d="M50 20c-19 0-34 12.500-34 28 0 9 5 17 13 22-1 5-4 9-8 12 8 0 14-3 18-6 3.500.8 7 1.200 11 1.200 19 0 34-12.500 34-28S69 20 50 20z" fill="url(#m1)"/></g></svg>
<svg style="left:180.10px;top:6.50px" width="33.4" height="33.4" viewBox="0 0 100 100"><defs><linearGradient id="ma0" x1="0" y1="0" x2="0" y2="1"><stop offset="0" stop-color="#1a78f0"/><stop offset="1" stop-color="#3ac0fc"/></linearGradient><linearGradient id="ma1" x1="0" y1="0" x2="0" y2="1"><stop offset="0" stop-color="#ffffff"/><stop offset="1" stop-color="#e4e8f0"/></linearGradient><clipPath id="ic4"><rect width="100" height="100" rx="22.500"/></clipPath></defs><g clip-path="url(#ic4)"><rect width="100" height="100" fill="url(#ma0)"/><rect x="15" y="27" width="70" height="47" rx="6" fill="url(#ma1)"/><path d="M17 31l33 27 33-27" fill="none" stroke="#9aa4b4" stroke-width="2.500" stroke-linejoin="round"/><path d="M17 71l24-22M83 71 59 49" stroke="#b4bccb" stroke-width="2"/></g></svg>
<svg style="left:223.50px;top:6.50px" width="33.4" height="33.4" viewBox="0 0 100 100"><defs><clipPath id="ic5"><rect width="100" height="100" rx="22.500"/></clipPath></defs><g clip-path="url(#ic5)"><rect width="100" height="100" fill="#f0ead8"/><path d="M0 0h40v45L0 80z" fill="#6cd070"/><path d="M0 80 40 45v55H0z" fill="#f2b8c8"/><path d="M62 0h38v55c-20-8-34-28-38-55z" fill="#e8e8ec"/><path d="M70 0c2 22 14 40 30 48" fill="none" stroke="#c8b4d8" stroke-width="7"/><path d="M55 100V60l45 20v20z" fill="#fad84a"/><path d="M100 62 55 100" stroke="#fff" stroke-width="7"/><path d="M50 0v38" stroke="#fff" stroke-width="20"/><path d="M50 0v40" stroke="#3a9af4" stroke-width="12"/><circle cx="42" cy="62" r="23" fill="#fff"/><circle cx="42" cy="62" r="19" fill="#2a78e8"/><path d="M42 47 31 74l11-6 11 6z" fill="#fff"/></g></svg>
<svg style="left:266.90px;top:6.50px" width="33.4" height="33.4" viewBox="0 0 100 100"><defs><clipPath id="ic6"><rect width="100" height="100" rx="22.500"/></clipPath></defs><g clip-path="url(#ic6)"><rect width="100" height="100" fill="#fbfbfb"/><ellipse cx="50" cy="29.500" rx="12" ry="19.500" fill="#f6a62a" fill-opacity=".8" transform="rotate(0 50 50)"/><ellipse cx="50" cy="29.500" rx="12" ry="19.500" fill="#e8d23a" fill-opacity=".8" transform="rotate(45 50 50)"/><ellipse cx="50" cy="29.500" rx="12" ry="19.500" fill="#8ccf4a" fill-opacity=".8" transform="rotate(90 50 50)"/><ellipse cx="50" cy="29.500" rx="12" ry="19.500" fill="#3ec0b0" fill-opacity=".8" transform="rotate(135 50 50)"/><ellipse cx="50" cy="29.500" rx="12" ry="19.500" fill="#4a8ef0" fill-opacity=".8" transform="rotate(180 50 50)"/><ellipse cx="50" cy="29.500" rx="12" ry="19.500" fill="#9a5ad8" fill-opacity=".8" transform="rotate(225 50 50)"/><ellipse cx="50" cy="29.500" rx="12" ry="19.500" fill="#d846a0" fill-opacity=".8" transform="rotate(270 50 50)"/><ellipse cx="50" cy="29.500" rx="12" ry="19.500" fill="#f0523a" fill-opacity=".8" transform="rotate(315 50 50)"/></g></svg>
<svg style="left:310.30px;top:6.50px" width="33.4" height="33.4" viewBox="0 0 100 100"><defs><linearGradient id="ft0" x1="0" y1="0" x2="0" y2="1"><stop offset="0" stop-color="#5ef27a"/><stop offset="1" stop-color="#0bbd38"/></linearGradient><linearGradient id="ft1" x1="0" y1="0" x2="0" y2="1"><stop offset="0" stop-color="#ffffff"/><stop offset="1" stop-color="#d4efd8"/></linearGradient><clipPath id="ic7"><rect width="100" height="100" rx="22.500"/></clipPath></defs><g clip-path="url(#ic7)"><rect width="100" height="100" fill="url(#ft0)"/><rect x="17" y="33" width="44" height="34" rx="9" fill="url(#ft1)"/><path d="M66 46 81 36v28L66 54z" fill="#e6f6e8" stroke="#e6f6e8" stroke-width="4" stroke-linejoin="round"/></g></svg>
<svg style="left:353.70px;top:6.50px" width="33.4" height="33.4" viewBox="0 0 100 100"><defs><clipPath id="ic8"><rect width="100" height="100" rx="22.500"/></clipPath></defs><g clip-path="url(#ic8)"><rect width="100" height="100" fill="#fdfdfd"/><rect width="100" height="29" fill="#f2453c"/><text x="50" y="23" text-anchor="middle" font-family="Liberation Sans,sans-serif" font-weight="bold" font-size="21" fill="#fff" letter-spacing="-.5">NOV</text><text x="50" y="81" text-anchor="middle" font-family="Liberation Sans,sans-serif" font-size="58" fill="#2a2a2a" letter-spacing="-2.500">27</text></g></svg>
<svg style="left:397.10px;top:6.50px" width="33.4" height="33.4" viewBox="0 0 100 100"><defs><linearGradient id="c0" x1="0" y1="0" x2="0" y2="1"><stop offset="0" stop-color="#bd9460"/><stop offset="1" stop-color="#a67e4c"/></linearGradient><clipPath id="ic9"><rect width="100" height="100" rx="22.500"/></clipPath></defs><g clip-path="url(#ic9)"><rect width="100" height="100" fill="url(#c0)"/><rect x="90" y="14" width="10" height="17" fill="#f2b03a"/><rect x="90" y="33" width="10" height="17" fill="#8cc04a"/><rect x="90" y="52" width="10" height="17" fill="#4a9ae0"/><rect x="90" y="71" width="10" height="17" fill="#9a9aa0"/><rect width="91" height="100" rx="0" fill="url(#c0)"/><circle cx="46" cy="50" r="27" fill="#a07848" stroke="#8e6a3e" stroke-width="2.500"/><circle cx="46" cy="42" r="10" fill="#b48c5c"/><path d="M26 66c4-12 36-12 40 0-5 6-12 9.500-20 9.500S31 72 26 66z" fill="#b48c5c"/></g></svg>
<svg style="left:440.50px;top:6.50px" width="33.4" height="33.4" viewBox="0 0 100 100"><defs><clipPath id="ic10"><rect width="100" height="100" rx="22.500"/></clipPath></defs><g clip-path="url(#ic10)"><rect width="100" height="100" fill="#fdfdfd"/><circle cx="22" cy="25" r="7.500" fill="#a8ccfa"/><circle cx="22" cy="25" r="5" fill="#2a7ef0"/><path d="M37 25h50" stroke="#cfcfd4" stroke-width="2.500"/><circle cx="22" cy="50" r="7.500" fill="#f9b4ae"/><circle cx="22" cy="50" r="5" fill="#f0483a"/><path d="M37 50h50" stroke="#cfcfd4" stroke-width="2.500"/><circle cx="22" cy="75" r="7.500" fill="#fbd6a0"/><circle cx="22" cy="75" r="5" fill="#f69a1a"/><path d="M37 75h50" stroke="#cfcfd4" stroke-width="2.500"/></g></svg>
<svg style="left:483.90px;top:6.50px" width="33.4" height="33.4" viewBox="0 0 100 100"><defs><linearGradient id="n0" x1="0" y1="0" x2="0" y2="1"><stop offset="0" stop-color="#fdd84a"/><stop offset="1" stop-color="#f8c21a"/></linearGradient><clipPath id="ic11"><rect width="100" height="100" rx="22.500"/></clipPath></defs><g clip-path="url(#ic11)"><rect width="100" height="100" fill="#fbfaf6"/><rect width="100" height="27" fill="url(#n0)"/><path d="M0 45h100M0 62h100M0 79h100" stroke="#dcdad2" stroke-width="1.800"/><path d="M0 28.500h100" stroke="#e0c040" stroke-width="1.500" stroke-dasharray="1.500 2.500"/></g></svg>
<svg style="left:527.30px;top:6.50px" width="33.4" height="33.4" viewBox="0 0 100 100"><defs><clipPath id="ic12"><rect width="100" height="100" rx="22.500"/></clipPath></defs><g clip-path="url(#ic12)"><rect width="100" height="100" fill="#fdfdfd"/><rect x="38" y="14" width="48" height="48" rx="4" fill="#4ab4f6"/><circle cx="38" cy="62" r="24" fill="#f2683a"/><path d="M40 38h46v24H62A24 24 0 0 0 40 38z" fill="#2a80d0" opacity=".35"/><path d="M18 62c8-22 20-24 20-10s10 10 14-2 10-8 12 0 8 6 18-8" fill="none" stroke="#1c2a5a" stroke-width="5.500" stroke-linecap="round" stroke-linejoin="round"/></g></svg>
<svg style="left:570.70px;top:6.50px" width="33.4" height="33.4" viewBox="0 0 100 100"><defs><linearGradient id="tv0" x1="0" y1="0" x2="0" y2="1"><stop offset="0" stop-color="#2e3a3a"/><stop offset="1" stop-color="#0c1212"/></linearGradient><clipPath id="ic13"><rect width="100" height="100" rx="22.500"/></clipPath></defs><g clip-path="url(#ic13)"><rect width="100" height="100" fill="url(#tv0)"/><g transform="translate(13,33) scale(.15)"><path d="M141.5 147.300c-3.900 9-8.500 17.300-13.900 24.900-7.300 10.400-13.300 17.600-17.900 21.600-7.100 6.600-14.800 9.900-22.900 10.100-5.900 0-12.900-1.700-21.200-5.100-8.300-3.400-15.900-5.100-22.800-5.100-7.300 0-15.100 1.700-23.400 5.100-8.400 3.400-15.100 5.200-20.200 5.400-7.800.3-15.700-3.100-23.500-10.400-5-4.400-11.200-11.900-18.700-22.500-8-11.300-14.600-24.300-19.800-39.200-5.500-16.100-8.300-31.600-8.300-46.700 0-17.300 3.700-32.100 11.200-44.600 5.900-10 13.700-18 23.400-23.800 9.800-5.800 20.300-8.800 31.700-9 6.200 0 14.400 1.900 24.500 5.700 10.100 3.800 16.600 5.700 19.400 5.700 2.100 0 9.300-2.200 21.500-6.700 11.500-4.100 21.200-5.900 29.200-5.200 21.600 1.700 37.800 10.300 48.600 25.600-19.300 11.700-28.900 28.100-28.700 49.100.2 16.400 6.100 30 17.800 40.800 5.300 5 11.200 8.900 17.800 11.600-1.400 4.100-2.900 8.100-4.500 11.900zM92 4.100c0 12.800-4.700 24.800-14 35.900-11.300 13.200-24.900 20.800-39.700 19.600-.2-1.500-.3-3.200-.3-4.900 0-12.300 5.400-25.500 14.900-36.300 4.800-5.500 10.800-10 18.200-13.600C78.500 1.200 85.500-.8 92.100-1c.2 1.700.3 3.400.3 5.100z" fill="#fff" transform="translate(54,0)"/></g><text x="46" y="65" font-family="Liberation Sans,sans-serif" font-weight="bold" font-size="40" fill="#fff" letter-spacing="-.5">tv</text></g></svg>
<svg style="left:614.10px;top:6.50px" width="33.4" height="33.4" viewBox="0 0 100 100"><defs><linearGradient id="mu0" x1="0" y1="0" x2="0" y2="1"><stop offset="0" stop-color="#fb5c74"/><stop offset="1" stop-color="#f0243c"/></linearGradient><clipPath id="ic14"><rect width="100" height="100" rx="22.500"/></clipPath></defs><g clip-path="url(#ic14)"><rect width="100" height="100" fill="url(#mu0)"/><path d="M40 27v40M74 20v40" stroke="#fff" stroke-width="6"/><path d="M37 22l40-8v13l-40 8z" fill="#fff"/><ellipse cx="31" cy="69" rx="11.500" ry="9" fill="#fff" transform="rotate(-15 31 69)"/><ellipse cx="65" cy="62" rx="11.500" ry="9" fill="#fff" transform="rotate(-15 65 62)"/></g></svg>
<svg style="left:657.50px;top:6.50px" width="33.4" height="33.4" viewBox="0 0 100 100"><defs><clipPath id="ic15"><rect width="100" height="100" rx="22.500"/></clipPath></defs><g clip-path="url(#ic15)"><rect width="100" height="100" fill="#fdfdfd"/><path d="M20 20h22l38 38v22H58L20 42z" fill="#f0364e"/><path d="M20 50l30 30H20z" fill="#f88a9a"/><path d="M80 50 50 20h30z" fill="#f88a9a"/></g></svg>
<svg style="left:700.90px;top:6.50px" width="33.4" height="33.4" viewBox="0 0 100 100"><defs><linearGradient id="as0" x1="0" y1="0" x2="0" y2="1"><stop offset="0" stop-color="#1cc0fb"/><stop offset="1" stop-color="#1a70ea"/></linearGradient><clipPath id="ic16"><rect width="100" height="100" rx="22.500"/></clipPath></defs><g clip-path="url(#ic16)"><rect width="100" height="100" fill="url(#as0)"/><g stroke="#fff" stroke-width="7.200" stroke-linecap="round" fill="none"><path d="M54 23 30 65M46 23l28 50M20 65h36M68 65h13M22 79l4-7"/></g></g></svg>
<svg style="left:744.30px;top:6.50px" width="33.4" height="33.4" viewBox="0 0 100 100"><defs><linearGradient id="st0" x1="0" y1="0" x2="0" y2="1"><stop offset="0" stop-color="#d4d6da"/><stop offset="1" stop-color="#8e9096"/></linearGradient><clipPath id="ic17"><rect width="100" height="100" rx="22.500"/></clipPath></defs><g clip-path="url(#ic17)"><rect width="100" height="100" fill="url(#st0)"/><circle cx="50" cy="50" r="40" fill="#3c3c40"/><circle cx="50" cy="50" r="34" fill="#9a9ca0"/><rect x="47" y="8" width="6" height="9" fill="#4a4a4e" transform="rotate(0 50 50)"/><rect x="47" y="8" width="6" height="9" fill="#4a4a4e" transform="rotate(20 50 50)"/><rect x="47" y="8" width="6" height="9" fill="#4a4a4e" transform="rotate(40 50 50)"/><rect x="47" y="8" width="6" height="9" fill="#4a4a4e" transform="rotate(60 50 50)"/><rect x="47" y="8" width="6" height="9" fill="#4a4a4e" transform="rotate(80 50 50)"/><rect x="47" y="8" width="6" height="9" fill="#4a4a4e" transform="rotate(100 50 50)"/><rect x="47" y="8" width="6" height="9" fill="#4a4a4e" transform="rotate(120 50 50)"/><rect x="47" y="8" width="6" height="9" fill="#4a4a4e" transform="rotate(140 50 50)"/><rect x="47" y="8" width="6" height="9" fill="#4a4a4e" transform="rotate(160 50 50)"/><rect x="47" y="8" width="6" height="9" fill="#4a4a4e" transform="rotate(180 50 50)"/><rect x="47" y="8" width="6" height="9" fill="#4a4a4e" transform="rotate(200 50 50)"/><rect x="47" y="8" width="6" height="9" fill="#4a4a4e" transform="rotate(220 50 50)"/><rect x="47" y="8" width="6" height="9" fill="#4a4a4e" transform="rotate(240 50 50)"/><rect x="47" y="8" width="6" height="9" fill="#4a4a4e" transform="rotate(260 50 50)"/><rect x="47" y="8" width="6" height="9" fill="#4a4a4e" transform="rotate(280 50 50)"/><rect x="47" y="8" width="6" height="9" fill="#4a4a4e" transform="rotate(300 50 50)"/><rect x="47" y="8" width="6" height="9" fill="#4a4a4e" transform="rotate(320 50 50)"/><rect x="47" y="8" width="6" height="9" fill="#4a4a4e" transform="rotate(340 50 50)"/><circle cx="50" cy="50" r="29" fill="#3c3c40"/><circle cx="50" cy="50" r="25" fill="#8a8c90"/><circle cx="50" cy="50" r="8" fill="#3c3c40"/><g stroke="#3c3c40" stroke-width="6"><path d="M50 50V23M50 50l23 14M50 50 27 64"/></g></g></svg>
<svg style="left:785.20px;top:2.90px" width="40" height="40" viewBox="0 0 40 40"><circle cx="20" cy="20" r="19.700" fill="#f4f5ef"/><circle cx="18.300" cy="19" r="7.500" fill="#d4d5d8" stroke="#2b2b2e" stroke-width="1.400"/><path d="M23.900 24.600 28.800 29.500" stroke="#2b2b2e" stroke-width="2.100" stroke-linecap="round"/><rect x="14.600" y="16" width="4.600" height="6.200" rx=".7" fill="#f4f4f4" stroke="#999" stroke-width=".4"/><rect x="16.800" y="14.600" width="4.600" height="6.200" rx=".7" fill="#fff" stroke="#999" stroke-width=".4"/></svg>
<div class="abs" style="left:22.0px;top:46.5px;width:2.400px;height:2.400px;border-radius:50%;background:#1a2a10"></div>
<div class="abs" style="left:803.7px;top:46.5px;width:2.400px;height:2.400px;border-radius:50%;background:#1a2a10"></div>
<div class="abs" style="left:835.8px;top:6.0px;width:.8px;height:37.500px;background:rgba(30,60,10,.45)"></div>
<svg style="left:849.20px;top:9.90px" width="37" height="31" viewBox="0 0 37 31"><defs><linearGradient id="fo0" x1="0" y1="0" x2="0" y2="1"><stop offset="0" stop-color="#7cccfa"/><stop offset="1" stop-color="#5cb8f4"/></linearGradient></defs><path d="M.5 4.500a2.500 2.500 0 0 1 2.500-2.500h8.500l3 3h19a2.500 2.500 0 0 1 2.500 2.500v3h-35.500z" fill="#4aa8ea"/><rect x=".5" y="7.500" width="35.500" height="22.500" rx="2.500" fill="url(#fo0)"/></svg>
<svg style="left:894.80px;top:4.30px" width="30" height="38" viewBox="0 0 30 38"><defs><linearGradient id="tr0" x1="0" y1="0" x2="1" y2="0"><stop offset="0" stop-color="#e2ebdf"/><stop offset=".35" stop-color="#fafcf8"/><stop offset=".7" stop-color="#eff4ec"/><stop offset="1" stop-color="#d9e4d4"/></linearGradient></defs><path d="M1.200 3.500h27.600l-3.300 30.500a3 3 0 0 1-3 2.700h-15a3 3 0 0 1-3-2.700z" fill="url(#tr0)" fill-opacity=".93"/><ellipse cx="15" cy="3.800" rx="13.900" ry="3" fill="#eef3ea" stroke="#c4d2be" stroke-width=".8"/><ellipse cx="15" cy="4.200" rx="11.800" ry="2" fill="#b9c9b2"/></svg>
</div>
</body>
</html>
